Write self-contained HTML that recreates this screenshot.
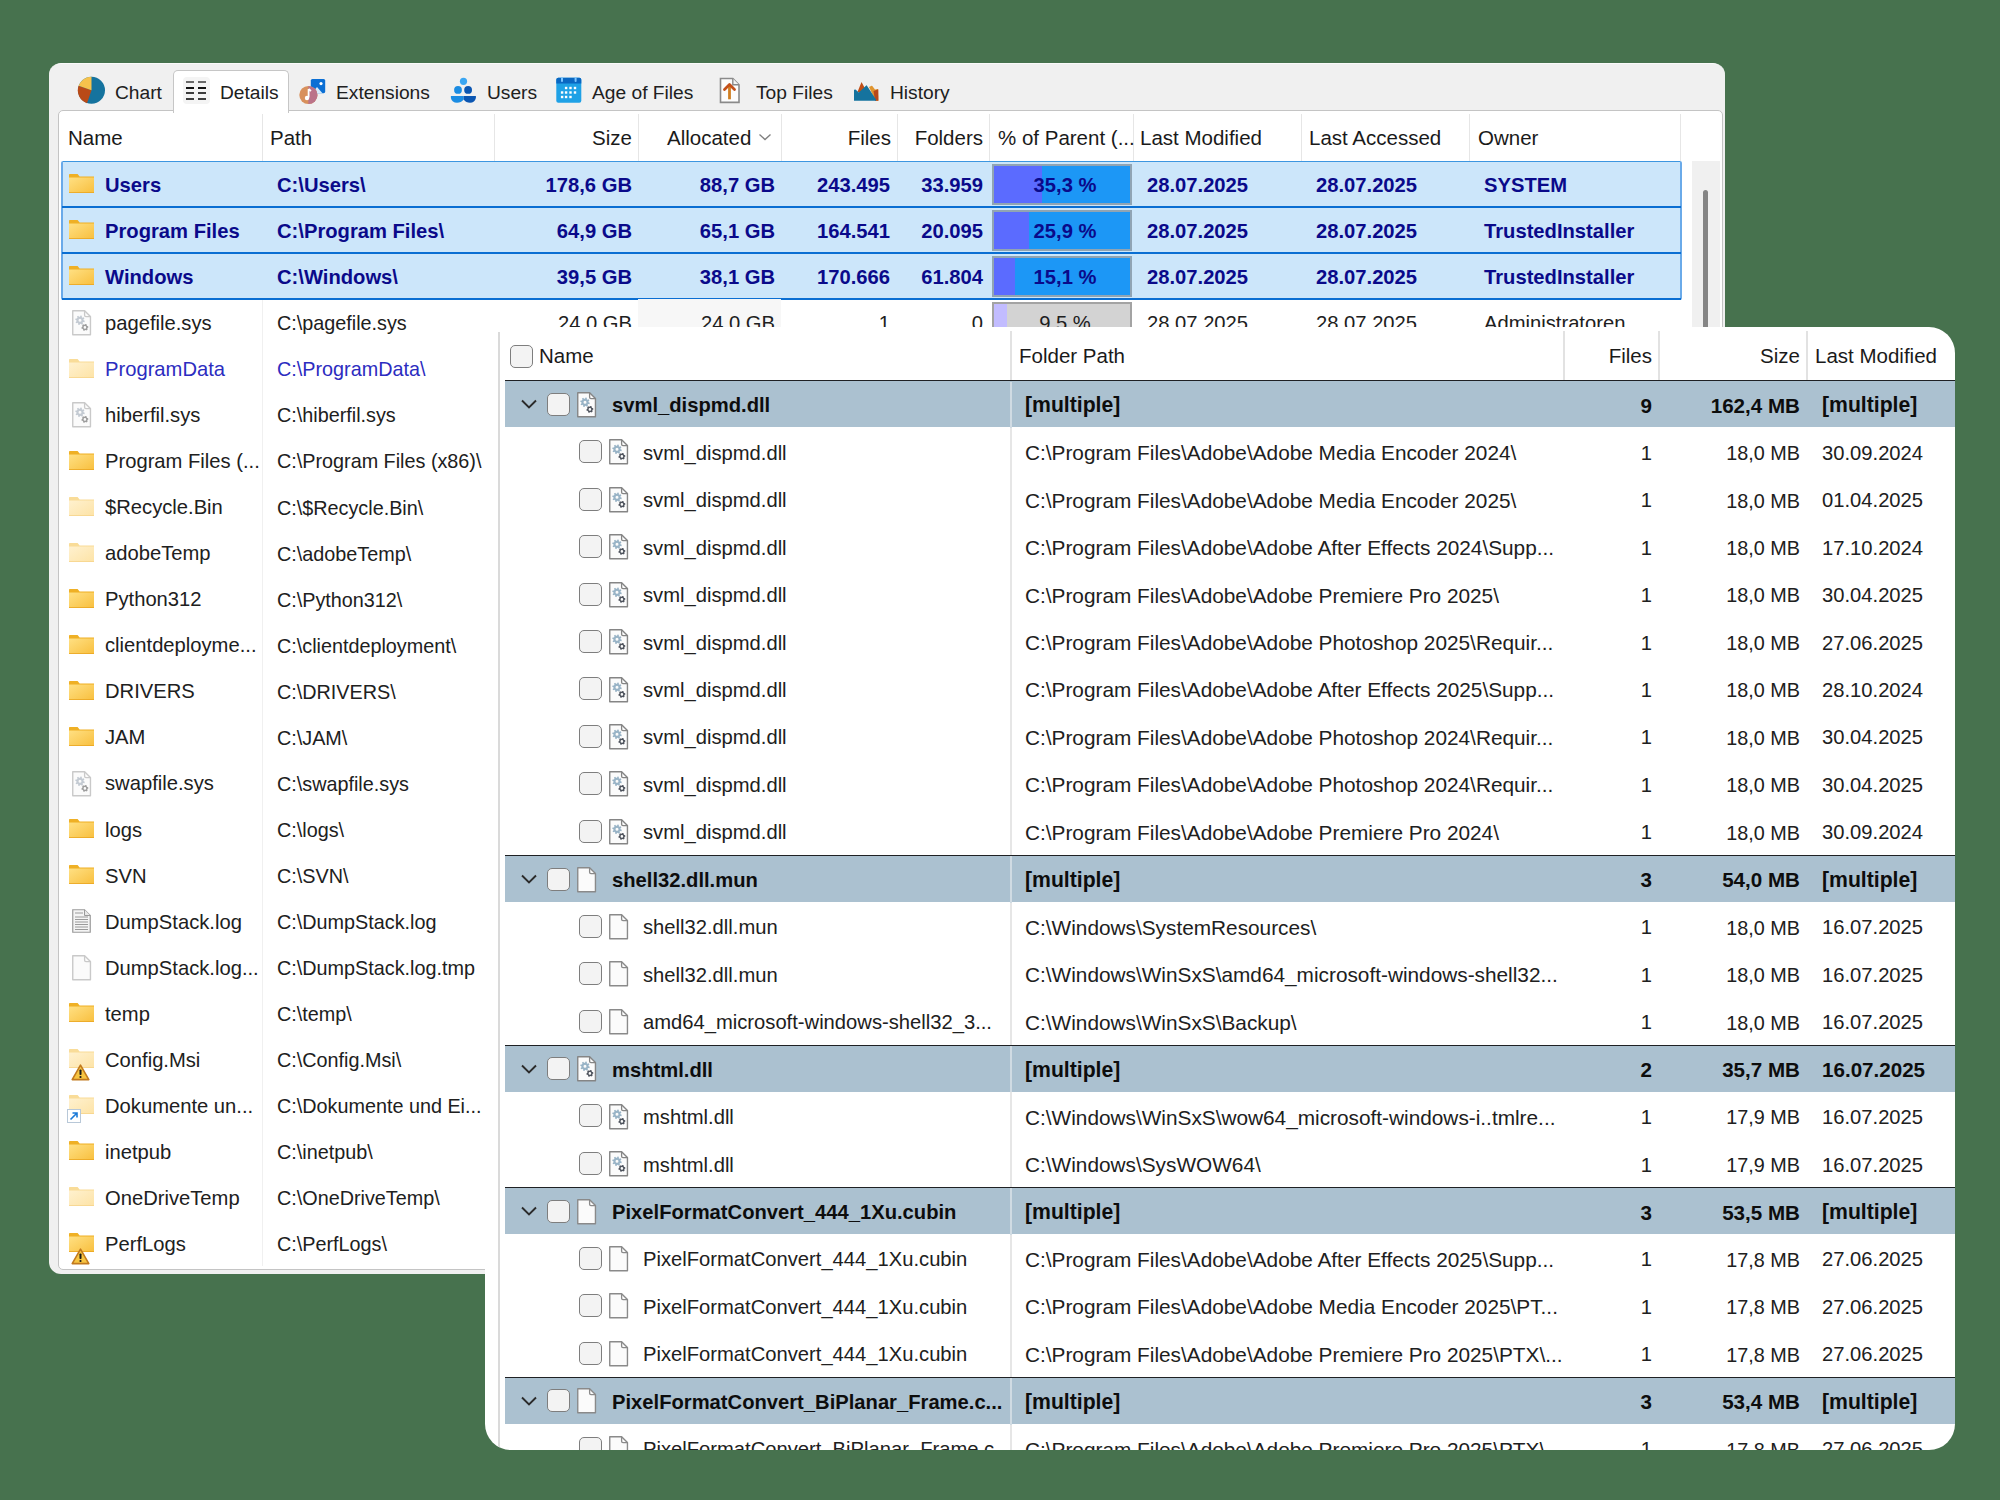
<!DOCTYPE html><html><head><meta charset="utf-8"><style>
*{box-sizing:border-box}
html,body{margin:0;padding:0}
body{width:2000px;height:1500px;background:#47724e;position:relative;overflow:hidden;font-family:"Liberation Sans", sans-serif}
.t{position:absolute;white-space:pre}
.a{position:absolute}
</style></head><body>
<div class="a" style="left:49px;top:63px;width:1676px;height:1211px;background:#f0f0f0;border-radius:12px;border-top:1px solid #fafafa"></div>
<div class="a" style="left:58px;top:110px;width:1665px;height:1160px;background:#fff;border:1.5px solid #c4c4c4;border-radius:5px;"></div>
<div class="a" style="left:173px;top:70px;width:116px;height:42.5px;background:#fff;border:1px solid #c6c6c6;border-bottom:none;border-radius:5px 5px 0 0;"></div>
<div class="t" style="left:115px;top:82.12px;font-size:19.2px;line-height:21.45px;font-weight:400;color:#202020;">Chart</div>
<div class="t" style="left:220px;top:82.12px;font-size:19.2px;line-height:21.45px;font-weight:400;color:#202020;">Details</div>
<div class="t" style="left:336px;top:82.12px;font-size:19.2px;line-height:21.45px;font-weight:400;color:#202020;">Extensions</div>
<div class="t" style="left:487px;top:82.12px;font-size:19.2px;line-height:21.45px;font-weight:400;color:#202020;">Users</div>
<div class="t" style="left:592px;top:82.12px;font-size:19.2px;line-height:21.45px;font-weight:400;color:#202020;">Age of Files</div>
<div class="t" style="left:756px;top:82.12px;font-size:19.2px;line-height:21.45px;font-weight:400;color:#202020;">Top Files</div>
<div class="t" style="left:890px;top:82.12px;font-size:19.2px;line-height:21.45px;font-weight:400;color:#202020;">History</div>
<svg class="a" style="left:77px;top:76px" width="29" height="29" viewBox="0 0 29 29"><circle cx="14.5" cy="14.3" r="13.5" fill="#15739e"/><path d="M14.5 14.3 L10 27.2 A13.5 13.5 0 0 1 1.6 9.8 Z" fill="#b94a17"/><path d="M14.5 14.3 L1.6 9.8 A13.5 13.5 0 0 1 14.5 0.8 Z" fill="#f6c24c"/></svg>
<div class="a" style="left:183px;top:77px;width:27px;height:27px;background:#f4f4f4;border-radius:4px"></div>
<div class="a" style="left:186px;top:81.2px;width:8px;height:1.8px;background:#6a6a6a"></div>
<div class="a" style="left:198.2px;top:81.2px;width:8px;height:1.8px;background:#6a6a6a"></div>
<div class="a" style="left:186px;top:86.8px;width:8px;height:1.8px;background:#111"></div>
<div class="a" style="left:198.2px;top:86.8px;width:8px;height:1.8px;background:#111"></div>
<div class="a" style="left:186px;top:92.4px;width:8px;height:1.8px;background:#3c3c3c"></div>
<div class="a" style="left:198.2px;top:92.4px;width:8px;height:1.8px;background:#3c3c3c"></div>
<div class="a" style="left:186px;top:98.0px;width:8px;height:1.8px;background:#3c3c3c"></div>
<div class="a" style="left:198.2px;top:98.0px;width:8px;height:1.8px;background:#3c3c3c"></div>
<svg class="a" style="left:298px;top:77px" width="30" height="28" viewBox="0 0 30 28"><rect x="12.8" y="2" width="14.4" height="14.2" rx="1.6" fill="#0b6fd4"/><path d="M14 16.2 L19 10 L24.5 16.2 Z" fill="#d6ebfb"/><circle cx="23" cy="6.6" r="1.6" fill="#fff"/><circle cx="10.4" cy="18" r="9.1" fill="#d8905c"/><path d="M10.4 8.9 A9.1 9.1 0 0 1 10.4 27.1 Z" fill="#bb7389"/><path d="M10.6 12 L10.6 20.5 M10.6 12 L13 14" stroke="#fff" stroke-width="1.8" fill="none"/><circle cx="9" cy="21" r="2.2" fill="#fff"/></svg>
<svg class="a" style="left:449px;top:76px" width="29" height="28" viewBox="0 0 29 28"><circle cx="14.5" cy="5.3" r="3.6" fill="#3aa6f2"/><circle cx="9" cy="13.9" r="3.9" fill="#1b8ce2"/><circle cx="19.1" cy="13.9" r="3.9" fill="#0b56b2"/><path d="M1.9 19.9 L14.7 19.9 L14.7 23.5 Q12 26.8 8 26.8 Q3 26.8 1.9 22 Z" fill="#1b8ce2"/><path d="M14.7 19.9 L26.9 19.9 L26.9 22 Q25.8 26.8 21 26.8 Q17 26.8 14.7 23.5 Z" fill="#0b56b2"/></svg>
<svg class="a" style="left:556px;top:77px" width="26" height="27" viewBox="0 0 26 27"><rect x="0.3" y="0.7" width="25" height="25.1" rx="2" fill="#1fa1e6"/><path d="M0.3 2.7 Q0.3 0.7 2.3 0.7 L23.3 0.7 Q25.3 0.7 25.3 2.7 L25.3 6.6 L0.3 6.6 Z" fill="#0a67c2"/><rect x="5" y="0" width="2" height="5" rx="1" fill="#7cc6ff"/><rect x="18.6" y="0" width="2" height="5" rx="1" fill="#7cc6ff"/><rect x="8.9" y="9.8" width="2.4" height="2.4" fill="#fff"/><rect x="13.3" y="9.8" width="2.4" height="2.4" fill="#fff"/><rect x="17.8" y="9.8" width="2.4" height="2.4" fill="#fff"/><rect x="4.9" y="14.3" width="2.4" height="2.4" fill="#fff"/><rect x="8.9" y="14.3" width="2.4" height="2.4" fill="#fff"/><rect x="13.3" y="14.3" width="2.4" height="2.4" fill="#fff"/><rect x="17.8" y="14.3" width="2.4" height="2.4" fill="#fff"/><rect x="4.9" y="18.8" width="2.4" height="2.4" fill="#fff"/><rect x="8.9" y="18.8" width="2.4" height="2.4" fill="#fff"/><rect x="13.3" y="18.8" width="2.4" height="2.4" fill="#fff"/></svg>
<svg class="a" style="left:719px;top:77px" width="22" height="27" viewBox="0 0 22 27"><path d="M1.5 1.5 L13.8 1.5 L20 7.8 L20 25.4 L1.5 25.4 Z" fill="#fdfdfd" stroke="#8a8a8a" stroke-width="1.6"/><path d="M13.8 1.5 L13.8 7.8 L20 7.8" fill="#f4f4f4" stroke="#8a8a8a" stroke-width="1.4"/><path d="M10.5 22.3 L10.5 8.3" stroke="#d07f22" stroke-width="2.8" fill="none"/><path d="M5.5 12.5 L10.5 7.6 L15.5 12.5" stroke="#c4501a" stroke-width="2.8" fill="none" stroke-linecap="round" stroke-linejoin="round"/></svg>
<svg class="a" style="left:853px;top:81px" width="27" height="21" viewBox="0 0 27 21"><path d="M4.5 11 L8.3 1.5 Q8.5 1 8.8 1.5 L12 7.5 L9 12 Z" fill="#c04f18"/><path d="M16 6 L18.6 4.8 Q19 4.6 19.3 5 L22 8.5 L25 8 L25.4 19.7 L22.5 19.7 Z" fill="#e0952f"/><path d="M20.5 10 L25.3 8.3 L25.4 19.7 L22 19.7 Z" fill="#b8481a"/><path d="M1 19.7 L1 9 Q1.5 8 2.5 8.6 L5.8 11.5 L13.2 4.5 Q13.5 4.2 13.8 4.6 L23 18.5 L23 19.7 Z" fill="#15739e"/></svg>
<div class="a" style="left:261.75px;top:114px;width:1.5px;height:47px;background:#e6e6e6"></div>
<div class="a" style="left:493.75px;top:114px;width:1.5px;height:47px;background:#e6e6e6"></div>
<div class="a" style="left:637.75px;top:114px;width:1.5px;height:47px;background:#e6e6e6"></div>
<div class="a" style="left:780.75px;top:114px;width:1.5px;height:47px;background:#e6e6e6"></div>
<div class="a" style="left:896.75px;top:114px;width:1.5px;height:47px;background:#e6e6e6"></div>
<div class="a" style="left:988.75px;top:114px;width:1.5px;height:47px;background:#e6e6e6"></div>
<div class="a" style="left:1132.75px;top:114px;width:1.5px;height:47px;background:#e6e6e6"></div>
<div class="a" style="left:1300.75px;top:114px;width:1.5px;height:47px;background:#e6e6e6"></div>
<div class="a" style="left:1468.75px;top:114px;width:1.5px;height:47px;background:#e6e6e6"></div>
<div class="a" style="left:1679.75px;top:114px;width:1.5px;height:47px;background:#e6e6e6"></div>
<div class="t" style="left:68px;top:127.15px;font-size:20.5px;line-height:22.90px;font-weight:400;color:#1a1a1a;">Name</div>
<div class="t" style="left:270px;top:127.15px;font-size:20.5px;line-height:22.90px;font-weight:400;color:#1a1a1a;">Path</div>
<div class="t" style="right:1368px;top:127.15px;font-size:20.5px;line-height:22.90px;font-weight:400;color:#1a1a1a;">Size</div>
<div class="t" style="left:667px;top:127.15px;font-size:20.5px;line-height:22.90px;font-weight:400;color:#1a1a1a;">Allocated</div>
<div class="t" style="right:1109px;top:127.15px;font-size:20.5px;line-height:22.90px;font-weight:400;color:#1a1a1a;">Files</div>
<div class="t" style="right:1017px;top:127.15px;font-size:20.5px;line-height:22.90px;font-weight:400;color:#1a1a1a;">Folders</div>
<div class="t" style="left:998px;top:127.15px;font-size:20.5px;line-height:22.90px;font-weight:400;color:#1a1a1a;">% of Parent (...</div>
<div class="t" style="left:1140px;top:127.15px;font-size:20.5px;line-height:22.90px;font-weight:400;color:#1a1a1a;">Last Modified</div>
<div class="t" style="left:1309px;top:127.15px;font-size:20.5px;line-height:22.90px;font-weight:400;color:#1a1a1a;">Last Accessed</div>
<div class="t" style="left:1478px;top:127.15px;font-size:20.5px;line-height:22.90px;font-weight:400;color:#1a1a1a;">Owner</div>
<svg class="a" style="left:758px;top:132px" width="14" height="10" viewBox="0 0 14 10"><path d="M1.5 2.5 L7 7.5 L12.5 2.5" fill="none" stroke="#808080" stroke-width="1.4"/></svg>
<div class="a" style="left:262px;top:161px;width:1px;height:1105px;background:#f0f0f0"></div>
<div class="a" style="left:1692px;top:161px;width:28px;height:1105px;background:#f0f0f0"></div>
<div class="a" style="left:1703px;top:190px;width:5px;height:140px;background:#858585;border-radius:3px"></div>
<div class="a" style="left:61px;top:161px;width:1621px;height:139px;background:#cce6fa;border-left:2px solid #6aaae9;border-right:2px solid #6aaae9;border-top:1.5px solid #3c96e0;border-radius:2px"></div>
<div class="a" style="left:62px;top:206px;width:1619px;height:2px;background:#0a6ed2"></div>
<div class="a" style="left:62px;top:252px;width:1619px;height:2px;background:#0a6ed2"></div>
<div class="a" style="left:62px;top:298px;width:1619px;height:2px;background:#0a6ed2"></div>
<svg class="a" style="left:69px;top:174.30px" width="25" height="19" viewBox="0 0 25 19.4" preserveAspectRatio="none"><defs><linearGradient id="fg0" x1="0" y1="0" x2="1" y2="1"><stop offset="0" stop-color="#ffe083"/><stop offset="1" stop-color="#f8bf3e"/></linearGradient></defs><path d="M0 0.8 Q0 0 0.8 0 L8.6 0 L10.6 2.6 L25 2.6 L25 19.4 L0 19.4 Z" fill="#efb025"/><path d="M0 3.6 L25 3.6 L25 19.4 L0 19.4 Z" fill="url(#fg0)"/><rect x="0" y="18.6" width="25" height="0.8" fill="#eaa520"/></svg>
<div class="t" style="left:105px;top:173.82px;font-size:20.2px;line-height:22.56px;font-weight:700;color:#0a0a8a;">Users</div>
<div class="t" style="left:277px;top:173.82px;font-size:20.2px;line-height:22.56px;font-weight:700;color:#0a0a8a;">C:\Users\</div>
<div class="t" style="right:1368px;top:173.82px;font-size:20.2px;line-height:22.56px;font-weight:700;color:#0a0a8a;">178,6 GB</div>
<div class="t" style="right:1225px;top:173.82px;font-size:20.2px;line-height:22.56px;font-weight:700;color:#0a0a8a;">88,7 GB</div>
<div class="t" style="right:1110px;top:173.82px;font-size:20.2px;line-height:22.56px;font-weight:700;color:#0a0a8a;">243.495</div>
<div class="t" style="right:1017px;top:173.82px;font-size:20.2px;line-height:22.56px;font-weight:700;color:#0a0a8a;">33.959</div>
<div class="a" style="left:992px;top:164.0px;width:140px;height:41px;background:#1c97f6;border:2px solid #90a4b4"></div>
<div class="a" style="left:994px;top:166.0px;width:48.0px;height:37px;background:#5b6bff"></div>
<div class="t" style="left:995px;width:140px;text-align:center;top:173.82px;font-size:20.2px;line-height:22.56px;font-weight:700;color:#0a0a8a">35,3 %</div>
<div class="t" style="left:1147px;top:173.82px;font-size:20.2px;line-height:22.56px;font-weight:700;color:#0a0a8a;">28.07.2025</div>
<div class="t" style="left:1316px;top:173.82px;font-size:20.2px;line-height:22.56px;font-weight:700;color:#0a0a8a;">28.07.2025</div>
<div class="t" style="left:1484px;top:173.82px;font-size:20.2px;line-height:22.56px;font-weight:700;color:#0a0a8a;">SYSTEM</div>
<svg class="a" style="left:69px;top:220.35px" width="25" height="19" viewBox="0 0 25 19.4" preserveAspectRatio="none"><defs><linearGradient id="fg0" x1="0" y1="0" x2="1" y2="1"><stop offset="0" stop-color="#ffe083"/><stop offset="1" stop-color="#f8bf3e"/></linearGradient></defs><path d="M0 0.8 Q0 0 0.8 0 L8.6 0 L10.6 2.6 L25 2.6 L25 19.4 L0 19.4 Z" fill="#efb025"/><path d="M0 3.6 L25 3.6 L25 19.4 L0 19.4 Z" fill="url(#fg0)"/><rect x="0" y="18.6" width="25" height="0.8" fill="#eaa520"/></svg>
<div class="t" style="left:105px;top:219.87px;font-size:20.2px;line-height:22.56px;font-weight:700;color:#0a0a8a;">Program Files</div>
<div class="t" style="left:277px;top:219.87px;font-size:20.2px;line-height:22.56px;font-weight:700;color:#0a0a8a;">C:\Program Files\</div>
<div class="t" style="right:1368px;top:219.87px;font-size:20.2px;line-height:22.56px;font-weight:700;color:#0a0a8a;">64,9 GB</div>
<div class="t" style="right:1225px;top:219.87px;font-size:20.2px;line-height:22.56px;font-weight:700;color:#0a0a8a;">65,1 GB</div>
<div class="t" style="right:1110px;top:219.87px;font-size:20.2px;line-height:22.56px;font-weight:700;color:#0a0a8a;">164.541</div>
<div class="t" style="right:1017px;top:219.87px;font-size:20.2px;line-height:22.56px;font-weight:700;color:#0a0a8a;">20.095</div>
<div class="a" style="left:992px;top:210.05px;width:140px;height:41px;background:#1c97f6;border:2px solid #90a4b4"></div>
<div class="a" style="left:994px;top:212.05px;width:35.2px;height:37px;background:#5b6bff"></div>
<div class="t" style="left:995px;width:140px;text-align:center;top:219.87px;font-size:20.2px;line-height:22.56px;font-weight:700;color:#0a0a8a">25,9 %</div>
<div class="t" style="left:1147px;top:219.87px;font-size:20.2px;line-height:22.56px;font-weight:700;color:#0a0a8a;">28.07.2025</div>
<div class="t" style="left:1316px;top:219.87px;font-size:20.2px;line-height:22.56px;font-weight:700;color:#0a0a8a;">28.07.2025</div>
<div class="t" style="left:1484px;top:219.87px;font-size:20.2px;line-height:22.56px;font-weight:700;color:#0a0a8a;">TrustedInstaller</div>
<svg class="a" style="left:69px;top:266.40px" width="25" height="19" viewBox="0 0 25 19.4" preserveAspectRatio="none"><defs><linearGradient id="fg0" x1="0" y1="0" x2="1" y2="1"><stop offset="0" stop-color="#ffe083"/><stop offset="1" stop-color="#f8bf3e"/></linearGradient></defs><path d="M0 0.8 Q0 0 0.8 0 L8.6 0 L10.6 2.6 L25 2.6 L25 19.4 L0 19.4 Z" fill="#efb025"/><path d="M0 3.6 L25 3.6 L25 19.4 L0 19.4 Z" fill="url(#fg0)"/><rect x="0" y="18.6" width="25" height="0.8" fill="#eaa520"/></svg>
<div class="t" style="left:105px;top:265.92px;font-size:20.2px;line-height:22.56px;font-weight:700;color:#0a0a8a;">Windows</div>
<div class="t" style="left:277px;top:265.92px;font-size:20.2px;line-height:22.56px;font-weight:700;color:#0a0a8a;">C:\Windows\</div>
<div class="t" style="right:1368px;top:265.92px;font-size:20.2px;line-height:22.56px;font-weight:700;color:#0a0a8a;">39,5 GB</div>
<div class="t" style="right:1225px;top:265.92px;font-size:20.2px;line-height:22.56px;font-weight:700;color:#0a0a8a;">38,1 GB</div>
<div class="t" style="right:1110px;top:265.92px;font-size:20.2px;line-height:22.56px;font-weight:700;color:#0a0a8a;">170.666</div>
<div class="t" style="right:1017px;top:265.92px;font-size:20.2px;line-height:22.56px;font-weight:700;color:#0a0a8a;">61.804</div>
<div class="a" style="left:992px;top:256.1px;width:140px;height:41px;background:#1c97f6;border:2px solid #90a4b4"></div>
<div class="a" style="left:994px;top:258.1px;width:20.5px;height:37px;background:#5b6bff"></div>
<div class="t" style="left:995px;width:140px;text-align:center;top:265.92px;font-size:20.2px;line-height:22.56px;font-weight:700;color:#0a0a8a">15,1 %</div>
<div class="t" style="left:1147px;top:265.92px;font-size:20.2px;line-height:22.56px;font-weight:700;color:#0a0a8a;">28.07.2025</div>
<div class="t" style="left:1316px;top:265.92px;font-size:20.2px;line-height:22.56px;font-weight:700;color:#0a0a8a;">28.07.2025</div>
<div class="t" style="left:1484px;top:265.92px;font-size:20.2px;line-height:22.56px;font-weight:700;color:#0a0a8a;">TrustedInstaller</div>
<div class="a" style="left:638px;top:299.15px;width:143px;height:46px;background:#f7f7f7"></div>
<svg class="a" style="left:71.5px;top:310.15px" width="20" height="26" viewBox="0 0 20 26"><path d="M0.75 0.75 L12.6 0.75 L18.45 6.6 L18.45 24.75 L0.75 24.75 Z" fill="#fbfbfb" stroke="#c9c9c9" stroke-width="1.4" stroke-linejoin="round"/><path d="M12.6 0.75 L12.6 5.2 Q12.6 6.6 14 6.6 L18.45 6.6" fill="none" stroke="#c9c9c9" stroke-width="1.3"/><path d="M8.00 6.70 L8.56 5.53 L9.84 5.87 L9.76 7.16 L10.55 7.75 L11.77 7.33 L12.43 8.46 L11.46 9.32 L11.60 10.30 L12.77 10.86 L12.43 12.14 L11.14 12.06 L10.55 12.85 L10.97 14.07 L9.84 14.73 L8.98 13.76 L8.00 13.90 L7.44 15.07 L6.16 14.73 L6.24 13.44 L5.45 12.85 L4.23 13.27 L3.57 12.14 L4.54 11.28 L4.40 10.30 L3.23 9.74 L3.57 8.46 L4.86 8.54 L5.45 7.75 L5.03 6.53 L6.16 5.87 L7.02 6.84 Z M9.50 10.30 A1.5 1.5 0 1 0 6.50 10.30 A1.5 1.5 0 1 0 9.50 10.30 Z" fill="#c3cad2" fill-rule="evenodd"/><path d="M12.90 14.60 L13.45 13.94 L14.65 14.37 L14.66 15.22 L15.32 16.00 L16.17 16.15 L16.40 17.40 L15.67 17.84 L15.32 18.80 L15.62 19.60 L14.65 20.43 L13.90 20.01 L12.90 20.20 L12.35 20.86 L11.15 20.43 L11.14 19.58 L10.48 18.80 L9.63 18.65 L9.40 17.40 L10.13 16.96 L10.48 16.00 L10.18 15.20 L11.15 14.37 L11.90 14.79 Z M14.20 17.40 A1.3 1.3 0 1 0 11.60 17.40 A1.3 1.3 0 1 0 14.20 17.40 Z" fill="#9d9d9d" fill-rule="evenodd"/></svg>
<div class="t" style="left:105px;top:311.97px;font-size:20.2px;line-height:22.56px;font-weight:400;color:#202020;">pagefile.sys</div>
<div class="t" style="left:277px;top:312.33px;font-size:19.8px;line-height:22.12px;font-weight:400;color:#202020;">C:\pagefile.sys</div>
<div class="t" style="right:1368px;top:311.97px;font-size:20.2px;line-height:22.56px;font-weight:400;color:#202020;">24,0 GB</div>
<div class="t" style="right:1225px;top:311.97px;font-size:20.2px;line-height:22.56px;font-weight:400;color:#202020;">24,0 GB</div>
<div class="t" style="right:1110px;top:311.97px;font-size:20.2px;line-height:22.56px;font-weight:400;color:#202020;">1</div>
<div class="t" style="right:1017px;top:311.97px;font-size:20.2px;line-height:22.56px;font-weight:400;color:#202020;">0</div>
<div class="a" style="left:992px;top:302.15px;width:140px;height:41px;background:#d3d3d3;border:2px solid #a3a3a3"></div>
<div class="a" style="left:994px;top:304.15px;width:12.9px;height:37px;background:#c2bcff"></div>
<div class="t" style="left:995px;width:140px;text-align:center;top:311.97px;font-size:20.2px;line-height:22.56px;font-weight:400;color:#202020">9,5 %</div>
<div class="t" style="left:1147px;top:311.97px;font-size:20.2px;line-height:22.56px;font-weight:400;color:#202020;">28.07.2025</div>
<div class="t" style="left:1316px;top:311.97px;font-size:20.2px;line-height:22.56px;font-weight:400;color:#202020;">28.07.2025</div>
<div class="t" style="left:1484px;top:311.97px;font-size:20.2px;line-height:22.56px;font-weight:400;color:#202020;">Administratoren</div>
<div class="a" style="left:638px;top:345.2px;width:143px;height:46px;background:#f7f7f7"></div>
<svg class="a" style="left:69px;top:358.50px" width="25" height="19" viewBox="0 0 25 19.4" preserveAspectRatio="none"><defs><linearGradient id="fg1" x1="0" y1="0" x2="1" y2="1"><stop offset="0" stop-color="#fff1cf"/><stop offset="1" stop-color="#fde3a6"/></linearGradient></defs><path d="M0 0.8 Q0 0 0.8 0 L8.6 0 L10.6 2.6 L25 2.6 L25 19.4 L0 19.4 Z" fill="#f9dc98"/><path d="M0 3.6 L25 3.6 L25 19.4 L0 19.4 Z" fill="url(#fg1)"/><rect x="0" y="18.6" width="25" height="0.8" fill="#f6d48a"/></svg>
<div class="t" style="left:105px;top:358.02px;font-size:20.2px;line-height:22.56px;font-weight:400;color:#2c2cc0;">ProgramData</div>
<div class="t" style="left:277px;top:358.38px;font-size:19.8px;line-height:22.12px;font-weight:400;color:#2c2cc0;">C:\ProgramData\</div>
<div class="a" style="left:638px;top:391.25px;width:143px;height:46px;background:#f7f7f7"></div>
<svg class="a" style="left:71.5px;top:402.25px" width="20" height="26" viewBox="0 0 20 26"><path d="M0.75 0.75 L12.6 0.75 L18.45 6.6 L18.45 24.75 L0.75 24.75 Z" fill="#fbfbfb" stroke="#c9c9c9" stroke-width="1.4" stroke-linejoin="round"/><path d="M12.6 0.75 L12.6 5.2 Q12.6 6.6 14 6.6 L18.45 6.6" fill="none" stroke="#c9c9c9" stroke-width="1.3"/><path d="M8.00 6.70 L8.56 5.53 L9.84 5.87 L9.76 7.16 L10.55 7.75 L11.77 7.33 L12.43 8.46 L11.46 9.32 L11.60 10.30 L12.77 10.86 L12.43 12.14 L11.14 12.06 L10.55 12.85 L10.97 14.07 L9.84 14.73 L8.98 13.76 L8.00 13.90 L7.44 15.07 L6.16 14.73 L6.24 13.44 L5.45 12.85 L4.23 13.27 L3.57 12.14 L4.54 11.28 L4.40 10.30 L3.23 9.74 L3.57 8.46 L4.86 8.54 L5.45 7.75 L5.03 6.53 L6.16 5.87 L7.02 6.84 Z M9.50 10.30 A1.5 1.5 0 1 0 6.50 10.30 A1.5 1.5 0 1 0 9.50 10.30 Z" fill="#c3cad2" fill-rule="evenodd"/><path d="M12.90 14.60 L13.45 13.94 L14.65 14.37 L14.66 15.22 L15.32 16.00 L16.17 16.15 L16.40 17.40 L15.67 17.84 L15.32 18.80 L15.62 19.60 L14.65 20.43 L13.90 20.01 L12.90 20.20 L12.35 20.86 L11.15 20.43 L11.14 19.58 L10.48 18.80 L9.63 18.65 L9.40 17.40 L10.13 16.96 L10.48 16.00 L10.18 15.20 L11.15 14.37 L11.90 14.79 Z M14.20 17.40 A1.3 1.3 0 1 0 11.60 17.40 A1.3 1.3 0 1 0 14.20 17.40 Z" fill="#9d9d9d" fill-rule="evenodd"/></svg>
<div class="t" style="left:105px;top:404.07px;font-size:20.2px;line-height:22.56px;font-weight:400;color:#202020;">hiberfil.sys</div>
<div class="t" style="left:277px;top:404.43px;font-size:19.8px;line-height:22.12px;font-weight:400;color:#202020;">C:\hiberfil.sys</div>
<div class="a" style="left:638px;top:437.29999999999995px;width:143px;height:46px;background:#f7f7f7"></div>
<svg class="a" style="left:69px;top:450.60px" width="25" height="19" viewBox="0 0 25 19.4" preserveAspectRatio="none"><defs><linearGradient id="fg0" x1="0" y1="0" x2="1" y2="1"><stop offset="0" stop-color="#ffe083"/><stop offset="1" stop-color="#f8bf3e"/></linearGradient></defs><path d="M0 0.8 Q0 0 0.8 0 L8.6 0 L10.6 2.6 L25 2.6 L25 19.4 L0 19.4 Z" fill="#efb025"/><path d="M0 3.6 L25 3.6 L25 19.4 L0 19.4 Z" fill="url(#fg0)"/><rect x="0" y="18.6" width="25" height="0.8" fill="#eaa520"/></svg>
<div class="t" style="left:105px;top:450.12px;font-size:20.2px;line-height:22.56px;font-weight:400;color:#202020;">Program Files (...</div>
<div class="t" style="left:277px;top:450.48px;font-size:19.8px;line-height:22.12px;font-weight:400;color:#202020;">C:\Program Files (x86)\</div>
<div class="a" style="left:638px;top:483.34999999999997px;width:143px;height:46px;background:#f7f7f7"></div>
<svg class="a" style="left:69px;top:496.65px" width="25" height="19" viewBox="0 0 25 19.4" preserveAspectRatio="none"><defs><linearGradient id="fg1" x1="0" y1="0" x2="1" y2="1"><stop offset="0" stop-color="#fff1cf"/><stop offset="1" stop-color="#fde3a6"/></linearGradient></defs><path d="M0 0.8 Q0 0 0.8 0 L8.6 0 L10.6 2.6 L25 2.6 L25 19.4 L0 19.4 Z" fill="#f9dc98"/><path d="M0 3.6 L25 3.6 L25 19.4 L0 19.4 Z" fill="url(#fg1)"/><rect x="0" y="18.6" width="25" height="0.8" fill="#f6d48a"/></svg>
<div class="t" style="left:105px;top:496.17px;font-size:20.2px;line-height:22.56px;font-weight:400;color:#202020;">$Recycle.Bin</div>
<div class="t" style="left:277px;top:496.53px;font-size:19.8px;line-height:22.12px;font-weight:400;color:#202020;">C:\$Recycle.Bin\</div>
<div class="a" style="left:638px;top:529.4px;width:143px;height:46px;background:#f7f7f7"></div>
<svg class="a" style="left:69px;top:542.70px" width="25" height="19" viewBox="0 0 25 19.4" preserveAspectRatio="none"><defs><linearGradient id="fg1" x1="0" y1="0" x2="1" y2="1"><stop offset="0" stop-color="#fff1cf"/><stop offset="1" stop-color="#fde3a6"/></linearGradient></defs><path d="M0 0.8 Q0 0 0.8 0 L8.6 0 L10.6 2.6 L25 2.6 L25 19.4 L0 19.4 Z" fill="#f9dc98"/><path d="M0 3.6 L25 3.6 L25 19.4 L0 19.4 Z" fill="url(#fg1)"/><rect x="0" y="18.6" width="25" height="0.8" fill="#f6d48a"/></svg>
<div class="t" style="left:105px;top:542.22px;font-size:20.2px;line-height:22.56px;font-weight:400;color:#202020;">adobeTemp</div>
<div class="t" style="left:277px;top:542.58px;font-size:19.8px;line-height:22.12px;font-weight:400;color:#202020;">C:\adobeTemp\</div>
<div class="a" style="left:638px;top:575.45px;width:143px;height:46px;background:#f7f7f7"></div>
<svg class="a" style="left:69px;top:588.75px" width="25" height="19" viewBox="0 0 25 19.4" preserveAspectRatio="none"><defs><linearGradient id="fg0" x1="0" y1="0" x2="1" y2="1"><stop offset="0" stop-color="#ffe083"/><stop offset="1" stop-color="#f8bf3e"/></linearGradient></defs><path d="M0 0.8 Q0 0 0.8 0 L8.6 0 L10.6 2.6 L25 2.6 L25 19.4 L0 19.4 Z" fill="#efb025"/><path d="M0 3.6 L25 3.6 L25 19.4 L0 19.4 Z" fill="url(#fg0)"/><rect x="0" y="18.6" width="25" height="0.8" fill="#eaa520"/></svg>
<div class="t" style="left:105px;top:588.27px;font-size:20.2px;line-height:22.56px;font-weight:400;color:#202020;">Python312</div>
<div class="t" style="left:277px;top:588.63px;font-size:19.8px;line-height:22.12px;font-weight:400;color:#202020;">C:\Python312\</div>
<div class="a" style="left:638px;top:621.5px;width:143px;height:46px;background:#f7f7f7"></div>
<svg class="a" style="left:69px;top:634.80px" width="25" height="19" viewBox="0 0 25 19.4" preserveAspectRatio="none"><defs><linearGradient id="fg0" x1="0" y1="0" x2="1" y2="1"><stop offset="0" stop-color="#ffe083"/><stop offset="1" stop-color="#f8bf3e"/></linearGradient></defs><path d="M0 0.8 Q0 0 0.8 0 L8.6 0 L10.6 2.6 L25 2.6 L25 19.4 L0 19.4 Z" fill="#efb025"/><path d="M0 3.6 L25 3.6 L25 19.4 L0 19.4 Z" fill="url(#fg0)"/><rect x="0" y="18.6" width="25" height="0.8" fill="#eaa520"/></svg>
<div class="t" style="left:105px;top:634.32px;font-size:20.2px;line-height:22.56px;font-weight:400;color:#202020;">clientdeployme...</div>
<div class="t" style="left:277px;top:634.68px;font-size:19.8px;line-height:22.12px;font-weight:400;color:#202020;">C:\clientdeployment\</div>
<div class="a" style="left:638px;top:667.55px;width:143px;height:46px;background:#f7f7f7"></div>
<svg class="a" style="left:69px;top:680.85px" width="25" height="19" viewBox="0 0 25 19.4" preserveAspectRatio="none"><defs><linearGradient id="fg0" x1="0" y1="0" x2="1" y2="1"><stop offset="0" stop-color="#ffe083"/><stop offset="1" stop-color="#f8bf3e"/></linearGradient></defs><path d="M0 0.8 Q0 0 0.8 0 L8.6 0 L10.6 2.6 L25 2.6 L25 19.4 L0 19.4 Z" fill="#efb025"/><path d="M0 3.6 L25 3.6 L25 19.4 L0 19.4 Z" fill="url(#fg0)"/><rect x="0" y="18.6" width="25" height="0.8" fill="#eaa520"/></svg>
<div class="t" style="left:105px;top:680.37px;font-size:20.2px;line-height:22.56px;font-weight:400;color:#202020;">DRIVERS</div>
<div class="t" style="left:277px;top:680.73px;font-size:19.8px;line-height:22.12px;font-weight:400;color:#202020;">C:\DRIVERS\</div>
<div class="a" style="left:638px;top:713.5999999999999px;width:143px;height:46px;background:#f7f7f7"></div>
<svg class="a" style="left:69px;top:726.90px" width="25" height="19" viewBox="0 0 25 19.4" preserveAspectRatio="none"><defs><linearGradient id="fg0" x1="0" y1="0" x2="1" y2="1"><stop offset="0" stop-color="#ffe083"/><stop offset="1" stop-color="#f8bf3e"/></linearGradient></defs><path d="M0 0.8 Q0 0 0.8 0 L8.6 0 L10.6 2.6 L25 2.6 L25 19.4 L0 19.4 Z" fill="#efb025"/><path d="M0 3.6 L25 3.6 L25 19.4 L0 19.4 Z" fill="url(#fg0)"/><rect x="0" y="18.6" width="25" height="0.8" fill="#eaa520"/></svg>
<div class="t" style="left:105px;top:726.42px;font-size:20.2px;line-height:22.56px;font-weight:400;color:#202020;">JAM</div>
<div class="t" style="left:277px;top:726.78px;font-size:19.8px;line-height:22.12px;font-weight:400;color:#202020;">C:\JAM\</div>
<div class="a" style="left:638px;top:759.65px;width:143px;height:46px;background:#f7f7f7"></div>
<svg class="a" style="left:71.5px;top:770.65px" width="20" height="26" viewBox="0 0 20 26"><path d="M0.75 0.75 L12.6 0.75 L18.45 6.6 L18.45 24.75 L0.75 24.75 Z" fill="#fbfbfb" stroke="#c9c9c9" stroke-width="1.4" stroke-linejoin="round"/><path d="M12.6 0.75 L12.6 5.2 Q12.6 6.6 14 6.6 L18.45 6.6" fill="none" stroke="#c9c9c9" stroke-width="1.3"/><path d="M8.00 6.70 L8.56 5.53 L9.84 5.87 L9.76 7.16 L10.55 7.75 L11.77 7.33 L12.43 8.46 L11.46 9.32 L11.60 10.30 L12.77 10.86 L12.43 12.14 L11.14 12.06 L10.55 12.85 L10.97 14.07 L9.84 14.73 L8.98 13.76 L8.00 13.90 L7.44 15.07 L6.16 14.73 L6.24 13.44 L5.45 12.85 L4.23 13.27 L3.57 12.14 L4.54 11.28 L4.40 10.30 L3.23 9.74 L3.57 8.46 L4.86 8.54 L5.45 7.75 L5.03 6.53 L6.16 5.87 L7.02 6.84 Z M9.50 10.30 A1.5 1.5 0 1 0 6.50 10.30 A1.5 1.5 0 1 0 9.50 10.30 Z" fill="#c3cad2" fill-rule="evenodd"/><path d="M12.90 14.60 L13.45 13.94 L14.65 14.37 L14.66 15.22 L15.32 16.00 L16.17 16.15 L16.40 17.40 L15.67 17.84 L15.32 18.80 L15.62 19.60 L14.65 20.43 L13.90 20.01 L12.90 20.20 L12.35 20.86 L11.15 20.43 L11.14 19.58 L10.48 18.80 L9.63 18.65 L9.40 17.40 L10.13 16.96 L10.48 16.00 L10.18 15.20 L11.15 14.37 L11.90 14.79 Z M14.20 17.40 A1.3 1.3 0 1 0 11.60 17.40 A1.3 1.3 0 1 0 14.20 17.40 Z" fill="#9d9d9d" fill-rule="evenodd"/></svg>
<div class="t" style="left:105px;top:772.47px;font-size:20.2px;line-height:22.56px;font-weight:400;color:#202020;">swapfile.sys</div>
<div class="t" style="left:277px;top:772.83px;font-size:19.8px;line-height:22.12px;font-weight:400;color:#202020;">C:\swapfile.sys</div>
<div class="a" style="left:638px;top:805.6999999999999px;width:143px;height:46px;background:#f7f7f7"></div>
<svg class="a" style="left:69px;top:819.00px" width="25" height="19" viewBox="0 0 25 19.4" preserveAspectRatio="none"><defs><linearGradient id="fg0" x1="0" y1="0" x2="1" y2="1"><stop offset="0" stop-color="#ffe083"/><stop offset="1" stop-color="#f8bf3e"/></linearGradient></defs><path d="M0 0.8 Q0 0 0.8 0 L8.6 0 L10.6 2.6 L25 2.6 L25 19.4 L0 19.4 Z" fill="#efb025"/><path d="M0 3.6 L25 3.6 L25 19.4 L0 19.4 Z" fill="url(#fg0)"/><rect x="0" y="18.6" width="25" height="0.8" fill="#eaa520"/></svg>
<div class="t" style="left:105px;top:818.52px;font-size:20.2px;line-height:22.56px;font-weight:400;color:#202020;">logs</div>
<div class="t" style="left:277px;top:818.88px;font-size:19.8px;line-height:22.12px;font-weight:400;color:#202020;">C:\logs\</div>
<div class="a" style="left:638px;top:851.75px;width:143px;height:46px;background:#f7f7f7"></div>
<svg class="a" style="left:69px;top:865.05px" width="25" height="19" viewBox="0 0 25 19.4" preserveAspectRatio="none"><defs><linearGradient id="fg0" x1="0" y1="0" x2="1" y2="1"><stop offset="0" stop-color="#ffe083"/><stop offset="1" stop-color="#f8bf3e"/></linearGradient></defs><path d="M0 0.8 Q0 0 0.8 0 L8.6 0 L10.6 2.6 L25 2.6 L25 19.4 L0 19.4 Z" fill="#efb025"/><path d="M0 3.6 L25 3.6 L25 19.4 L0 19.4 Z" fill="url(#fg0)"/><rect x="0" y="18.6" width="25" height="0.8" fill="#eaa520"/></svg>
<div class="t" style="left:105px;top:864.57px;font-size:20.2px;line-height:22.56px;font-weight:400;color:#202020;">SVN</div>
<div class="t" style="left:277px;top:864.93px;font-size:19.8px;line-height:22.12px;font-weight:400;color:#202020;">C:\SVN\</div>
<div class="a" style="left:638px;top:897.8px;width:143px;height:46px;background:#f7f7f7"></div>
<svg class="a" style="left:72px;top:908.8px" width="19" height="24" viewBox="0 0 19 24"><path d="M0.75 0.75 L12.5 0.75 L18.25 6.5 L18.25 23.25 L0.75 23.25 Z" fill="#f4f4f4" stroke="#9a9a9a" stroke-width="1.2"/><path d="M12.5 0.75 L12.5 6.5 L18.25 6.5" fill="#e8e8e8" stroke="#9a9a9a" stroke-width="1"/><line x1="3" y1="4" x2="11" y2="4" stroke="#9a9a9a" stroke-width="1"/><line x1="3" y1="8" x2="16" y2="8" stroke="#9a9a9a" stroke-width="1"/><line x1="3" y1="10.5" x2="16" y2="10.5" stroke="#9a9a9a" stroke-width="1"/><line x1="3" y1="13" x2="16" y2="13" stroke="#9a9a9a" stroke-width="1"/><line x1="3" y1="15.5" x2="16" y2="15.5" stroke="#9a9a9a" stroke-width="1"/><line x1="3" y1="18" x2="16" y2="18" stroke="#9a9a9a" stroke-width="1"/><line x1="3" y1="20.5" x2="16" y2="20.5" stroke="#9a9a9a" stroke-width="1"/></svg>
<div class="t" style="left:105px;top:910.62px;font-size:20.2px;line-height:22.56px;font-weight:400;color:#202020;">DumpStack.log</div>
<div class="t" style="left:277px;top:910.98px;font-size:19.8px;line-height:22.12px;font-weight:400;color:#202020;">C:\DumpStack.log</div>
<div class="a" style="left:638px;top:943.8499999999999px;width:143px;height:46px;background:#f7f7f7"></div>
<svg class="a" style="left:71.5px;top:954.8499999999999px" width="20" height="26" viewBox="0 0 20 26"><path d="M0.75 0.75 L12.6 0.75 L18.45 6.6 L18.45 24.75 L0.75 24.75 Z" fill="#fbfbfb" stroke="#c9c9c9" stroke-width="1.4" stroke-linejoin="round"/><path d="M12.6 0.75 L12.6 5.2 Q12.6 6.6 14 6.6 L18.45 6.6" fill="none" stroke="#c9c9c9" stroke-width="1.3"/></svg>
<div class="t" style="left:105px;top:956.67px;font-size:20.2px;line-height:22.56px;font-weight:400;color:#202020;">DumpStack.log...</div>
<div class="t" style="left:277px;top:957.03px;font-size:19.8px;line-height:22.12px;font-weight:400;color:#202020;">C:\DumpStack.log.tmp</div>
<div class="a" style="left:638px;top:989.9px;width:143px;height:46px;background:#f7f7f7"></div>
<svg class="a" style="left:69px;top:1003.20px" width="25" height="19" viewBox="0 0 25 19.4" preserveAspectRatio="none"><defs><linearGradient id="fg0" x1="0" y1="0" x2="1" y2="1"><stop offset="0" stop-color="#ffe083"/><stop offset="1" stop-color="#f8bf3e"/></linearGradient></defs><path d="M0 0.8 Q0 0 0.8 0 L8.6 0 L10.6 2.6 L25 2.6 L25 19.4 L0 19.4 Z" fill="#efb025"/><path d="M0 3.6 L25 3.6 L25 19.4 L0 19.4 Z" fill="url(#fg0)"/><rect x="0" y="18.6" width="25" height="0.8" fill="#eaa520"/></svg>
<div class="t" style="left:105px;top:1002.72px;font-size:20.2px;line-height:22.56px;font-weight:400;color:#202020;">temp</div>
<div class="t" style="left:277px;top:1003.08px;font-size:19.8px;line-height:22.12px;font-weight:400;color:#202020;">C:\temp\</div>
<div class="a" style="left:638px;top:1035.9499999999998px;width:143px;height:46px;background:#f7f7f7"></div>
<svg class="a" style="left:69px;top:1049.25px" width="25" height="19" viewBox="0 0 25 19.4" preserveAspectRatio="none"><defs><linearGradient id="fg1" x1="0" y1="0" x2="1" y2="1"><stop offset="0" stop-color="#fff1cf"/><stop offset="1" stop-color="#fde3a6"/></linearGradient></defs><path d="M0 0.8 Q0 0 0.8 0 L8.6 0 L10.6 2.6 L25 2.6 L25 19.4 L0 19.4 Z" fill="#f9dc98"/><path d="M0 3.6 L25 3.6 L25 19.4 L0 19.4 Z" fill="url(#fg1)"/><rect x="0" y="18.6" width="25" height="0.8" fill="#f6d48a"/></svg><svg class="a" style="left:70.5px;top:1063.95px" width="19" height="17" viewBox="0 0 19 17"><path d="M9.5 1.2 L17.8 15.6 L1.2 15.6 Z" fill="#f7c542" stroke="#c27a1e" stroke-width="1.6" stroke-linejoin="round"/><rect x="8.5" y="5.5" width="2" height="5.5" rx="0.8" fill="#1a1a1a"/><circle cx="9.5" cy="13" r="1.1" fill="#1a1a1a"/></svg>
<div class="t" style="left:105px;top:1048.77px;font-size:20.2px;line-height:22.56px;font-weight:400;color:#202020;">Config.Msi</div>
<div class="t" style="left:277px;top:1049.13px;font-size:19.8px;line-height:22.12px;font-weight:400;color:#202020;">C:\Config.Msi\</div>
<div class="a" style="left:638px;top:1082.0px;width:143px;height:46px;background:#f7f7f7"></div>
<svg class="a" style="left:69px;top:1095.30px" width="25" height="19" viewBox="0 0 25 19.4" preserveAspectRatio="none"><defs><linearGradient id="fg1" x1="0" y1="0" x2="1" y2="1"><stop offset="0" stop-color="#fff1cf"/><stop offset="1" stop-color="#fde3a6"/></linearGradient></defs><path d="M0 0.8 Q0 0 0.8 0 L8.6 0 L10.6 2.6 L25 2.6 L25 19.4 L0 19.4 Z" fill="#f9dc98"/><path d="M0 3.6 L25 3.6 L25 19.4 L0 19.4 Z" fill="url(#fg1)"/><rect x="0" y="18.6" width="25" height="0.8" fill="#f6d48a"/></svg><svg class="a" style="left:67px;top:1109.0px" width="14" height="14" viewBox="0 0 14 14"><rect x="0.5" y="0.5" width="13" height="13" fill="#fff" stroke="#b8c8d8" stroke-width="1"/><path d="M3.5 10.5 L10 4 M5.5 4 L10 4 L10 8.5" fill="none" stroke="#1a7ad8" stroke-width="1.6"/></svg>
<div class="t" style="left:105px;top:1094.82px;font-size:20.2px;line-height:22.56px;font-weight:400;color:#202020;">Dokumente un...</div>
<div class="t" style="left:277px;top:1095.18px;font-size:19.8px;line-height:22.12px;font-weight:400;color:#202020;">C:\Dokumente und Ei...</div>
<div class="a" style="left:638px;top:1128.05px;width:143px;height:46px;background:#f7f7f7"></div>
<svg class="a" style="left:69px;top:1141.35px" width="25" height="19" viewBox="0 0 25 19.4" preserveAspectRatio="none"><defs><linearGradient id="fg0" x1="0" y1="0" x2="1" y2="1"><stop offset="0" stop-color="#ffe083"/><stop offset="1" stop-color="#f8bf3e"/></linearGradient></defs><path d="M0 0.8 Q0 0 0.8 0 L8.6 0 L10.6 2.6 L25 2.6 L25 19.4 L0 19.4 Z" fill="#efb025"/><path d="M0 3.6 L25 3.6 L25 19.4 L0 19.4 Z" fill="url(#fg0)"/><rect x="0" y="18.6" width="25" height="0.8" fill="#eaa520"/></svg>
<div class="t" style="left:105px;top:1140.87px;font-size:20.2px;line-height:22.56px;font-weight:400;color:#202020;">inetpub</div>
<div class="t" style="left:277px;top:1141.23px;font-size:19.8px;line-height:22.12px;font-weight:400;color:#202020;">C:\inetpub\</div>
<div class="a" style="left:638px;top:1174.1px;width:143px;height:46px;background:#f7f7f7"></div>
<svg class="a" style="left:69px;top:1187.40px" width="25" height="19" viewBox="0 0 25 19.4" preserveAspectRatio="none"><defs><linearGradient id="fg1" x1="0" y1="0" x2="1" y2="1"><stop offset="0" stop-color="#fff1cf"/><stop offset="1" stop-color="#fde3a6"/></linearGradient></defs><path d="M0 0.8 Q0 0 0.8 0 L8.6 0 L10.6 2.6 L25 2.6 L25 19.4 L0 19.4 Z" fill="#f9dc98"/><path d="M0 3.6 L25 3.6 L25 19.4 L0 19.4 Z" fill="url(#fg1)"/><rect x="0" y="18.6" width="25" height="0.8" fill="#f6d48a"/></svg>
<div class="t" style="left:105px;top:1186.92px;font-size:20.2px;line-height:22.56px;font-weight:400;color:#202020;">OneDriveTemp</div>
<div class="t" style="left:277px;top:1187.28px;font-size:19.8px;line-height:22.12px;font-weight:400;color:#202020;">C:\OneDriveTemp\</div>
<div class="a" style="left:638px;top:1220.1499999999999px;width:143px;height:46px;background:#f7f7f7"></div>
<svg class="a" style="left:69px;top:1233.45px" width="25" height="19" viewBox="0 0 25 19.4" preserveAspectRatio="none"><defs><linearGradient id="fg0" x1="0" y1="0" x2="1" y2="1"><stop offset="0" stop-color="#ffe083"/><stop offset="1" stop-color="#f8bf3e"/></linearGradient></defs><path d="M0 0.8 Q0 0 0.8 0 L8.6 0 L10.6 2.6 L25 2.6 L25 19.4 L0 19.4 Z" fill="#efb025"/><path d="M0 3.6 L25 3.6 L25 19.4 L0 19.4 Z" fill="url(#fg0)"/><rect x="0" y="18.6" width="25" height="0.8" fill="#eaa520"/></svg><svg class="a" style="left:70.5px;top:1248.15px" width="19" height="17" viewBox="0 0 19 17"><path d="M9.5 1.2 L17.8 15.6 L1.2 15.6 Z" fill="#f7c542" stroke="#c27a1e" stroke-width="1.6" stroke-linejoin="round"/><rect x="8.5" y="5.5" width="2" height="5.5" rx="0.8" fill="#1a1a1a"/><circle cx="9.5" cy="13" r="1.1" fill="#1a1a1a"/></svg>
<div class="t" style="left:105px;top:1232.97px;font-size:20.2px;line-height:22.56px;font-weight:400;color:#202020;">PerfLogs</div>
<div class="t" style="left:277px;top:1233.33px;font-size:19.8px;line-height:22.12px;font-weight:400;color:#202020;">C:\PerfLogs\</div>
<div class="a" style="left:485px;top:327px;width:1470px;height:1123px;background:#fff;border-radius:26px;overflow:hidden">
<div class="a" style="left:-485px;top:-327px;width:2000px;height:1500px">
<div class="a" style="left:498px;top:332px;width:2px;height:1130px;background:#dadada"></div>
<div class="a" style="left:1010px;top:331px;width:1.5px;height:49px;background:#e2e2e2"></div>
<div class="a" style="left:1563px;top:331px;width:1.5px;height:49px;background:#e2e2e2"></div>
<div class="a" style="left:1658px;top:331px;width:1.5px;height:49px;background:#e2e2e2"></div>
<div class="a" style="left:1806px;top:331px;width:1.5px;height:49px;background:#e2e2e2"></div>
<div class="a" style="left:510px;top:345px;width:23px;height:23px;background:#f3f3f3;border:1.8px solid #7e7e7e;border-radius:5px"></div>
<div class="t" style="left:539px;top:345.25px;font-size:20.5px;line-height:22.90px;font-weight:400;color:#1a1a1a;">Name</div>
<div class="t" style="left:1019px;top:345.25px;font-size:20.5px;line-height:22.90px;font-weight:400;color:#1a1a1a;">Folder Path</div>
<div class="t" style="right:348px;top:345.25px;font-size:20.5px;line-height:22.90px;font-weight:400;color:#1a1a1a;">Files</div>
<div class="t" style="right:200px;top:345.25px;font-size:20.5px;line-height:22.90px;font-weight:400;color:#1a1a1a;">Size</div>
<div class="t" style="left:1815px;top:345.25px;font-size:20.5px;line-height:22.90px;font-weight:400;color:#1a1a1a;">Last Modified</div>
<div class="a" style="left:1010px;top:380px;width:1.5px;height:1080px;background:#e6e6e6;z-index:0"></div>
<div class="a" style="left:505px;top:380.30px;width:1460px;height:47.05px;background:#abc1d0;border-top:1.5px solid #1f2124"></div>
<div class="a" style="left:1010px;top:381.80px;width:1.5px;height:46.25px;background:#d0dbe3"></div>
<svg class="a" style="left:521px;top:399.30px" width="16" height="10" viewBox="0 0 16 10"><path d="M1 1.5 L8 8.5 L15 1.5" fill="none" stroke="#2b2b2b" stroke-width="1.9"/></svg>
<div class="a" style="left:547.3px;top:393.0px;width:23px;height:23px;background:#f3f3f3;border:1.8px solid #7e7e7e;border-radius:5px"></div>
<svg class="a" style="left:577px;top:392.0px" width="20" height="26" viewBox="0 0 20 26"><path d="M0.75 0.75 L12.6 0.75 L18.45 6.6 L18.45 24.75 L0.75 24.75 Z" fill="#fbfbfb" stroke="#858585" stroke-width="1.4" stroke-linejoin="round"/><path d="M12.6 0.75 L12.6 5.2 Q12.6 6.6 14 6.6 L18.45 6.6" fill="none" stroke="#858585" stroke-width="1.3"/><path d="M8.00 6.70 L8.56 5.53 L9.84 5.87 L9.76 7.16 L10.55 7.75 L11.77 7.33 L12.43 8.46 L11.46 9.32 L11.60 10.30 L12.77 10.86 L12.43 12.14 L11.14 12.06 L10.55 12.85 L10.97 14.07 L9.84 14.73 L8.98 13.76 L8.00 13.90 L7.44 15.07 L6.16 14.73 L6.24 13.44 L5.45 12.85 L4.23 13.27 L3.57 12.14 L4.54 11.28 L4.40 10.30 L3.23 9.74 L3.57 8.46 L4.86 8.54 L5.45 7.75 L5.03 6.53 L6.16 5.87 L7.02 6.84 Z M9.50 10.30 A1.5 1.5 0 1 0 6.50 10.30 A1.5 1.5 0 1 0 9.50 10.30 Z" fill="#98b3c6" fill-rule="evenodd"/><path d="M12.90 14.60 L13.45 13.94 L14.65 14.37 L14.66 15.22 L15.32 16.00 L16.17 16.15 L16.40 17.40 L15.67 17.84 L15.32 18.80 L15.62 19.60 L14.65 20.43 L13.90 20.01 L12.90 20.20 L12.35 20.86 L11.15 20.43 L11.14 19.58 L10.48 18.80 L9.63 18.65 L9.40 17.40 L10.13 16.96 L10.48 16.00 L10.18 15.20 L11.15 14.37 L11.90 14.79 Z M14.20 17.40 A1.3 1.3 0 1 0 11.60 17.40 A1.3 1.3 0 1 0 14.20 17.40 Z" fill="#4d525c" fill-rule="evenodd"/></svg>
<div class="t" style="left:612px;top:394.32px;font-size:20.2px;line-height:22.56px;font-weight:700;color:#0d0d0d;">svml_dispmd.dll</div>
<div class="t" style="left:1025px;top:393.41px;font-size:21.2px;line-height:23.68px;font-weight:700;color:#0d0d0d;">[multiple]</div>
<div class="t" style="right:348px;top:393.96px;font-size:20.6px;line-height:23.01px;font-weight:700;color:#0d0d0d;">9</div>
<div class="t" style="right:200px;top:393.96px;font-size:20.6px;line-height:23.01px;font-weight:700;color:#0d0d0d;">162,4 MB</div>
<div class="t" style="left:1822px;top:393.41px;font-size:21.2px;line-height:23.68px;font-weight:700;color:#0d0d0d;">[multiple]</div>
<div class="a" style="left:578.6px;top:440.15px;width:23px;height:23px;background:#f3f3f3;border:1.8px solid #7e7e7e;border-radius:5px"></div>
<svg class="a" style="left:608.6px;top:439.25px" width="20" height="26" viewBox="0 0 20 26"><path d="M0.75 0.75 L12.6 0.75 L18.45 6.6 L18.45 24.75 L0.75 24.75 Z" fill="#fbfbfb" stroke="#858585" stroke-width="1.4" stroke-linejoin="round"/><path d="M12.6 0.75 L12.6 5.2 Q12.6 6.6 14 6.6 L18.45 6.6" fill="none" stroke="#858585" stroke-width="1.3"/><path d="M8.00 6.70 L8.56 5.53 L9.84 5.87 L9.76 7.16 L10.55 7.75 L11.77 7.33 L12.43 8.46 L11.46 9.32 L11.60 10.30 L12.77 10.86 L12.43 12.14 L11.14 12.06 L10.55 12.85 L10.97 14.07 L9.84 14.73 L8.98 13.76 L8.00 13.90 L7.44 15.07 L6.16 14.73 L6.24 13.44 L5.45 12.85 L4.23 13.27 L3.57 12.14 L4.54 11.28 L4.40 10.30 L3.23 9.74 L3.57 8.46 L4.86 8.54 L5.45 7.75 L5.03 6.53 L6.16 5.87 L7.02 6.84 Z M9.50 10.30 A1.5 1.5 0 1 0 6.50 10.30 A1.5 1.5 0 1 0 9.50 10.30 Z" fill="#98b3c6" fill-rule="evenodd"/><path d="M12.90 14.60 L13.45 13.94 L14.65 14.37 L14.66 15.22 L15.32 16.00 L16.17 16.15 L16.40 17.40 L15.67 17.84 L15.32 18.80 L15.62 19.60 L14.65 20.43 L13.90 20.01 L12.90 20.20 L12.35 20.86 L11.15 20.43 L11.14 19.58 L10.48 18.80 L9.63 18.65 L9.40 17.40 L10.13 16.96 L10.48 16.00 L10.18 15.20 L11.15 14.37 L11.90 14.79 Z M14.20 17.40 A1.3 1.3 0 1 0 11.60 17.40 A1.3 1.3 0 1 0 14.20 17.40 Z" fill="#4d525c" fill-rule="evenodd"/></svg>
<div class="t" style="left:643px;top:441.77px;font-size:20.2px;line-height:22.56px;font-weight:400;color:#202020;">svml_dispmd.dll</div>
<div class="t" style="left:1025px;top:441.23px;font-size:20.8px;line-height:23.23px;font-weight:400;color:#202020;">C:\Program Files\Adobe\Adobe Media Encoder 2024\</div>
<div class="t" style="right:348px;top:441.77px;font-size:20.2px;line-height:22.56px;font-weight:400;color:#202020;">1</div>
<div class="t" style="right:200px;top:442.13px;font-size:19.8px;line-height:22.12px;font-weight:400;color:#202020;">18,0 MB</div>
<div class="t" style="left:1822px;top:441.77px;font-size:20.2px;line-height:22.56px;font-weight:400;color:#202020;">30.09.2024</div>
<div class="a" style="left:578.6px;top:487.6px;width:23px;height:23px;background:#f3f3f3;border:1.8px solid #7e7e7e;border-radius:5px"></div>
<svg class="a" style="left:608.6px;top:486.70000000000005px" width="20" height="26" viewBox="0 0 20 26"><path d="M0.75 0.75 L12.6 0.75 L18.45 6.6 L18.45 24.75 L0.75 24.75 Z" fill="#fbfbfb" stroke="#858585" stroke-width="1.4" stroke-linejoin="round"/><path d="M12.6 0.75 L12.6 5.2 Q12.6 6.6 14 6.6 L18.45 6.6" fill="none" stroke="#858585" stroke-width="1.3"/><path d="M8.00 6.70 L8.56 5.53 L9.84 5.87 L9.76 7.16 L10.55 7.75 L11.77 7.33 L12.43 8.46 L11.46 9.32 L11.60 10.30 L12.77 10.86 L12.43 12.14 L11.14 12.06 L10.55 12.85 L10.97 14.07 L9.84 14.73 L8.98 13.76 L8.00 13.90 L7.44 15.07 L6.16 14.73 L6.24 13.44 L5.45 12.85 L4.23 13.27 L3.57 12.14 L4.54 11.28 L4.40 10.30 L3.23 9.74 L3.57 8.46 L4.86 8.54 L5.45 7.75 L5.03 6.53 L6.16 5.87 L7.02 6.84 Z M9.50 10.30 A1.5 1.5 0 1 0 6.50 10.30 A1.5 1.5 0 1 0 9.50 10.30 Z" fill="#98b3c6" fill-rule="evenodd"/><path d="M12.90 14.60 L13.45 13.94 L14.65 14.37 L14.66 15.22 L15.32 16.00 L16.17 16.15 L16.40 17.40 L15.67 17.84 L15.32 18.80 L15.62 19.60 L14.65 20.43 L13.90 20.01 L12.90 20.20 L12.35 20.86 L11.15 20.43 L11.14 19.58 L10.48 18.80 L9.63 18.65 L9.40 17.40 L10.13 16.96 L10.48 16.00 L10.18 15.20 L11.15 14.37 L11.90 14.79 Z M14.20 17.40 A1.3 1.3 0 1 0 11.60 17.40 A1.3 1.3 0 1 0 14.20 17.40 Z" fill="#4d525c" fill-rule="evenodd"/></svg>
<div class="t" style="left:643px;top:489.22px;font-size:20.2px;line-height:22.56px;font-weight:400;color:#202020;">svml_dispmd.dll</div>
<div class="t" style="left:1025px;top:488.68px;font-size:20.8px;line-height:23.23px;font-weight:400;color:#202020;">C:\Program Files\Adobe\Adobe Media Encoder 2025\</div>
<div class="t" style="right:348px;top:489.22px;font-size:20.2px;line-height:22.56px;font-weight:400;color:#202020;">1</div>
<div class="t" style="right:200px;top:489.58px;font-size:19.8px;line-height:22.12px;font-weight:400;color:#202020;">18,0 MB</div>
<div class="t" style="left:1822px;top:489.22px;font-size:20.2px;line-height:22.56px;font-weight:400;color:#202020;">01.04.2025</div>
<div class="a" style="left:578.6px;top:535.0500000000001px;width:23px;height:23px;background:#f3f3f3;border:1.8px solid #7e7e7e;border-radius:5px"></div>
<svg class="a" style="left:608.6px;top:534.1500000000001px" width="20" height="26" viewBox="0 0 20 26"><path d="M0.75 0.75 L12.6 0.75 L18.45 6.6 L18.45 24.75 L0.75 24.75 Z" fill="#fbfbfb" stroke="#858585" stroke-width="1.4" stroke-linejoin="round"/><path d="M12.6 0.75 L12.6 5.2 Q12.6 6.6 14 6.6 L18.45 6.6" fill="none" stroke="#858585" stroke-width="1.3"/><path d="M8.00 6.70 L8.56 5.53 L9.84 5.87 L9.76 7.16 L10.55 7.75 L11.77 7.33 L12.43 8.46 L11.46 9.32 L11.60 10.30 L12.77 10.86 L12.43 12.14 L11.14 12.06 L10.55 12.85 L10.97 14.07 L9.84 14.73 L8.98 13.76 L8.00 13.90 L7.44 15.07 L6.16 14.73 L6.24 13.44 L5.45 12.85 L4.23 13.27 L3.57 12.14 L4.54 11.28 L4.40 10.30 L3.23 9.74 L3.57 8.46 L4.86 8.54 L5.45 7.75 L5.03 6.53 L6.16 5.87 L7.02 6.84 Z M9.50 10.30 A1.5 1.5 0 1 0 6.50 10.30 A1.5 1.5 0 1 0 9.50 10.30 Z" fill="#98b3c6" fill-rule="evenodd"/><path d="M12.90 14.60 L13.45 13.94 L14.65 14.37 L14.66 15.22 L15.32 16.00 L16.17 16.15 L16.40 17.40 L15.67 17.84 L15.32 18.80 L15.62 19.60 L14.65 20.43 L13.90 20.01 L12.90 20.20 L12.35 20.86 L11.15 20.43 L11.14 19.58 L10.48 18.80 L9.63 18.65 L9.40 17.40 L10.13 16.96 L10.48 16.00 L10.18 15.20 L11.15 14.37 L11.90 14.79 Z M14.20 17.40 A1.3 1.3 0 1 0 11.60 17.40 A1.3 1.3 0 1 0 14.20 17.40 Z" fill="#4d525c" fill-rule="evenodd"/></svg>
<div class="t" style="left:643px;top:536.67px;font-size:20.2px;line-height:22.56px;font-weight:400;color:#202020;">svml_dispmd.dll</div>
<div class="t" style="left:1025px;top:536.13px;font-size:20.8px;line-height:23.23px;font-weight:400;color:#202020;">C:\Program Files\Adobe\Adobe After Effects 2024\Supp...</div>
<div class="t" style="right:348px;top:536.67px;font-size:20.2px;line-height:22.56px;font-weight:400;color:#202020;">1</div>
<div class="t" style="right:200px;top:537.03px;font-size:19.8px;line-height:22.12px;font-weight:400;color:#202020;">18,0 MB</div>
<div class="t" style="left:1822px;top:536.67px;font-size:20.2px;line-height:22.56px;font-weight:400;color:#202020;">17.10.2024</div>
<div class="a" style="left:578.6px;top:582.5px;width:23px;height:23px;background:#f3f3f3;border:1.8px solid #7e7e7e;border-radius:5px"></div>
<svg class="a" style="left:608.6px;top:581.6px" width="20" height="26" viewBox="0 0 20 26"><path d="M0.75 0.75 L12.6 0.75 L18.45 6.6 L18.45 24.75 L0.75 24.75 Z" fill="#fbfbfb" stroke="#858585" stroke-width="1.4" stroke-linejoin="round"/><path d="M12.6 0.75 L12.6 5.2 Q12.6 6.6 14 6.6 L18.45 6.6" fill="none" stroke="#858585" stroke-width="1.3"/><path d="M8.00 6.70 L8.56 5.53 L9.84 5.87 L9.76 7.16 L10.55 7.75 L11.77 7.33 L12.43 8.46 L11.46 9.32 L11.60 10.30 L12.77 10.86 L12.43 12.14 L11.14 12.06 L10.55 12.85 L10.97 14.07 L9.84 14.73 L8.98 13.76 L8.00 13.90 L7.44 15.07 L6.16 14.73 L6.24 13.44 L5.45 12.85 L4.23 13.27 L3.57 12.14 L4.54 11.28 L4.40 10.30 L3.23 9.74 L3.57 8.46 L4.86 8.54 L5.45 7.75 L5.03 6.53 L6.16 5.87 L7.02 6.84 Z M9.50 10.30 A1.5 1.5 0 1 0 6.50 10.30 A1.5 1.5 0 1 0 9.50 10.30 Z" fill="#98b3c6" fill-rule="evenodd"/><path d="M12.90 14.60 L13.45 13.94 L14.65 14.37 L14.66 15.22 L15.32 16.00 L16.17 16.15 L16.40 17.40 L15.67 17.84 L15.32 18.80 L15.62 19.60 L14.65 20.43 L13.90 20.01 L12.90 20.20 L12.35 20.86 L11.15 20.43 L11.14 19.58 L10.48 18.80 L9.63 18.65 L9.40 17.40 L10.13 16.96 L10.48 16.00 L10.18 15.20 L11.15 14.37 L11.90 14.79 Z M14.20 17.40 A1.3 1.3 0 1 0 11.60 17.40 A1.3 1.3 0 1 0 14.20 17.40 Z" fill="#4d525c" fill-rule="evenodd"/></svg>
<div class="t" style="left:643px;top:584.12px;font-size:20.2px;line-height:22.56px;font-weight:400;color:#202020;">svml_dispmd.dll</div>
<div class="t" style="left:1025px;top:583.58px;font-size:20.8px;line-height:23.23px;font-weight:400;color:#202020;">C:\Program Files\Adobe\Adobe Premiere Pro 2025\</div>
<div class="t" style="right:348px;top:584.12px;font-size:20.2px;line-height:22.56px;font-weight:400;color:#202020;">1</div>
<div class="t" style="right:200px;top:584.48px;font-size:19.8px;line-height:22.12px;font-weight:400;color:#202020;">18,0 MB</div>
<div class="t" style="left:1822px;top:584.12px;font-size:20.2px;line-height:22.56px;font-weight:400;color:#202020;">30.04.2025</div>
<div class="a" style="left:578.6px;top:629.9499999999999px;width:23px;height:23px;background:#f3f3f3;border:1.8px solid #7e7e7e;border-radius:5px"></div>
<svg class="a" style="left:608.6px;top:629.05px" width="20" height="26" viewBox="0 0 20 26"><path d="M0.75 0.75 L12.6 0.75 L18.45 6.6 L18.45 24.75 L0.75 24.75 Z" fill="#fbfbfb" stroke="#858585" stroke-width="1.4" stroke-linejoin="round"/><path d="M12.6 0.75 L12.6 5.2 Q12.6 6.6 14 6.6 L18.45 6.6" fill="none" stroke="#858585" stroke-width="1.3"/><path d="M8.00 6.70 L8.56 5.53 L9.84 5.87 L9.76 7.16 L10.55 7.75 L11.77 7.33 L12.43 8.46 L11.46 9.32 L11.60 10.30 L12.77 10.86 L12.43 12.14 L11.14 12.06 L10.55 12.85 L10.97 14.07 L9.84 14.73 L8.98 13.76 L8.00 13.90 L7.44 15.07 L6.16 14.73 L6.24 13.44 L5.45 12.85 L4.23 13.27 L3.57 12.14 L4.54 11.28 L4.40 10.30 L3.23 9.74 L3.57 8.46 L4.86 8.54 L5.45 7.75 L5.03 6.53 L6.16 5.87 L7.02 6.84 Z M9.50 10.30 A1.5 1.5 0 1 0 6.50 10.30 A1.5 1.5 0 1 0 9.50 10.30 Z" fill="#98b3c6" fill-rule="evenodd"/><path d="M12.90 14.60 L13.45 13.94 L14.65 14.37 L14.66 15.22 L15.32 16.00 L16.17 16.15 L16.40 17.40 L15.67 17.84 L15.32 18.80 L15.62 19.60 L14.65 20.43 L13.90 20.01 L12.90 20.20 L12.35 20.86 L11.15 20.43 L11.14 19.58 L10.48 18.80 L9.63 18.65 L9.40 17.40 L10.13 16.96 L10.48 16.00 L10.18 15.20 L11.15 14.37 L11.90 14.79 Z M14.20 17.40 A1.3 1.3 0 1 0 11.60 17.40 A1.3 1.3 0 1 0 14.20 17.40 Z" fill="#4d525c" fill-rule="evenodd"/></svg>
<div class="t" style="left:643px;top:631.57px;font-size:20.2px;line-height:22.56px;font-weight:400;color:#202020;">svml_dispmd.dll</div>
<div class="t" style="left:1025px;top:631.03px;font-size:20.8px;line-height:23.23px;font-weight:400;color:#202020;">C:\Program Files\Adobe\Adobe Photoshop 2025\Requir...</div>
<div class="t" style="right:348px;top:631.57px;font-size:20.2px;line-height:22.56px;font-weight:400;color:#202020;">1</div>
<div class="t" style="right:200px;top:631.93px;font-size:19.8px;line-height:22.12px;font-weight:400;color:#202020;">18,0 MB</div>
<div class="t" style="left:1822px;top:631.57px;font-size:20.2px;line-height:22.56px;font-weight:400;color:#202020;">27.06.2025</div>
<div class="a" style="left:578.6px;top:677.4px;width:23px;height:23px;background:#f3f3f3;border:1.8px solid #7e7e7e;border-radius:5px"></div>
<svg class="a" style="left:608.6px;top:676.5px" width="20" height="26" viewBox="0 0 20 26"><path d="M0.75 0.75 L12.6 0.75 L18.45 6.6 L18.45 24.75 L0.75 24.75 Z" fill="#fbfbfb" stroke="#858585" stroke-width="1.4" stroke-linejoin="round"/><path d="M12.6 0.75 L12.6 5.2 Q12.6 6.6 14 6.6 L18.45 6.6" fill="none" stroke="#858585" stroke-width="1.3"/><path d="M8.00 6.70 L8.56 5.53 L9.84 5.87 L9.76 7.16 L10.55 7.75 L11.77 7.33 L12.43 8.46 L11.46 9.32 L11.60 10.30 L12.77 10.86 L12.43 12.14 L11.14 12.06 L10.55 12.85 L10.97 14.07 L9.84 14.73 L8.98 13.76 L8.00 13.90 L7.44 15.07 L6.16 14.73 L6.24 13.44 L5.45 12.85 L4.23 13.27 L3.57 12.14 L4.54 11.28 L4.40 10.30 L3.23 9.74 L3.57 8.46 L4.86 8.54 L5.45 7.75 L5.03 6.53 L6.16 5.87 L7.02 6.84 Z M9.50 10.30 A1.5 1.5 0 1 0 6.50 10.30 A1.5 1.5 0 1 0 9.50 10.30 Z" fill="#98b3c6" fill-rule="evenodd"/><path d="M12.90 14.60 L13.45 13.94 L14.65 14.37 L14.66 15.22 L15.32 16.00 L16.17 16.15 L16.40 17.40 L15.67 17.84 L15.32 18.80 L15.62 19.60 L14.65 20.43 L13.90 20.01 L12.90 20.20 L12.35 20.86 L11.15 20.43 L11.14 19.58 L10.48 18.80 L9.63 18.65 L9.40 17.40 L10.13 16.96 L10.48 16.00 L10.18 15.20 L11.15 14.37 L11.90 14.79 Z M14.20 17.40 A1.3 1.3 0 1 0 11.60 17.40 A1.3 1.3 0 1 0 14.20 17.40 Z" fill="#4d525c" fill-rule="evenodd"/></svg>
<div class="t" style="left:643px;top:679.02px;font-size:20.2px;line-height:22.56px;font-weight:400;color:#202020;">svml_dispmd.dll</div>
<div class="t" style="left:1025px;top:678.48px;font-size:20.8px;line-height:23.23px;font-weight:400;color:#202020;">C:\Program Files\Adobe\Adobe After Effects 2025\Supp...</div>
<div class="t" style="right:348px;top:679.02px;font-size:20.2px;line-height:22.56px;font-weight:400;color:#202020;">1</div>
<div class="t" style="right:200px;top:679.38px;font-size:19.8px;line-height:22.12px;font-weight:400;color:#202020;">18,0 MB</div>
<div class="t" style="left:1822px;top:679.02px;font-size:20.2px;line-height:22.56px;font-weight:400;color:#202020;">28.10.2024</div>
<div class="a" style="left:578.6px;top:724.85px;width:23px;height:23px;background:#f3f3f3;border:1.8px solid #7e7e7e;border-radius:5px"></div>
<svg class="a" style="left:608.6px;top:723.95px" width="20" height="26" viewBox="0 0 20 26"><path d="M0.75 0.75 L12.6 0.75 L18.45 6.6 L18.45 24.75 L0.75 24.75 Z" fill="#fbfbfb" stroke="#858585" stroke-width="1.4" stroke-linejoin="round"/><path d="M12.6 0.75 L12.6 5.2 Q12.6 6.6 14 6.6 L18.45 6.6" fill="none" stroke="#858585" stroke-width="1.3"/><path d="M8.00 6.70 L8.56 5.53 L9.84 5.87 L9.76 7.16 L10.55 7.75 L11.77 7.33 L12.43 8.46 L11.46 9.32 L11.60 10.30 L12.77 10.86 L12.43 12.14 L11.14 12.06 L10.55 12.85 L10.97 14.07 L9.84 14.73 L8.98 13.76 L8.00 13.90 L7.44 15.07 L6.16 14.73 L6.24 13.44 L5.45 12.85 L4.23 13.27 L3.57 12.14 L4.54 11.28 L4.40 10.30 L3.23 9.74 L3.57 8.46 L4.86 8.54 L5.45 7.75 L5.03 6.53 L6.16 5.87 L7.02 6.84 Z M9.50 10.30 A1.5 1.5 0 1 0 6.50 10.30 A1.5 1.5 0 1 0 9.50 10.30 Z" fill="#98b3c6" fill-rule="evenodd"/><path d="M12.90 14.60 L13.45 13.94 L14.65 14.37 L14.66 15.22 L15.32 16.00 L16.17 16.15 L16.40 17.40 L15.67 17.84 L15.32 18.80 L15.62 19.60 L14.65 20.43 L13.90 20.01 L12.90 20.20 L12.35 20.86 L11.15 20.43 L11.14 19.58 L10.48 18.80 L9.63 18.65 L9.40 17.40 L10.13 16.96 L10.48 16.00 L10.18 15.20 L11.15 14.37 L11.90 14.79 Z M14.20 17.40 A1.3 1.3 0 1 0 11.60 17.40 A1.3 1.3 0 1 0 14.20 17.40 Z" fill="#4d525c" fill-rule="evenodd"/></svg>
<div class="t" style="left:643px;top:726.47px;font-size:20.2px;line-height:22.56px;font-weight:400;color:#202020;">svml_dispmd.dll</div>
<div class="t" style="left:1025px;top:725.93px;font-size:20.8px;line-height:23.23px;font-weight:400;color:#202020;">C:\Program Files\Adobe\Adobe Photoshop 2024\Requir...</div>
<div class="t" style="right:348px;top:726.47px;font-size:20.2px;line-height:22.56px;font-weight:400;color:#202020;">1</div>
<div class="t" style="right:200px;top:726.83px;font-size:19.8px;line-height:22.12px;font-weight:400;color:#202020;">18,0 MB</div>
<div class="t" style="left:1822px;top:726.47px;font-size:20.2px;line-height:22.56px;font-weight:400;color:#202020;">30.04.2025</div>
<div class="a" style="left:578.6px;top:772.3000000000001px;width:23px;height:23px;background:#f3f3f3;border:1.8px solid #7e7e7e;border-radius:5px"></div>
<svg class="a" style="left:608.6px;top:771.4000000000001px" width="20" height="26" viewBox="0 0 20 26"><path d="M0.75 0.75 L12.6 0.75 L18.45 6.6 L18.45 24.75 L0.75 24.75 Z" fill="#fbfbfb" stroke="#858585" stroke-width="1.4" stroke-linejoin="round"/><path d="M12.6 0.75 L12.6 5.2 Q12.6 6.6 14 6.6 L18.45 6.6" fill="none" stroke="#858585" stroke-width="1.3"/><path d="M8.00 6.70 L8.56 5.53 L9.84 5.87 L9.76 7.16 L10.55 7.75 L11.77 7.33 L12.43 8.46 L11.46 9.32 L11.60 10.30 L12.77 10.86 L12.43 12.14 L11.14 12.06 L10.55 12.85 L10.97 14.07 L9.84 14.73 L8.98 13.76 L8.00 13.90 L7.44 15.07 L6.16 14.73 L6.24 13.44 L5.45 12.85 L4.23 13.27 L3.57 12.14 L4.54 11.28 L4.40 10.30 L3.23 9.74 L3.57 8.46 L4.86 8.54 L5.45 7.75 L5.03 6.53 L6.16 5.87 L7.02 6.84 Z M9.50 10.30 A1.5 1.5 0 1 0 6.50 10.30 A1.5 1.5 0 1 0 9.50 10.30 Z" fill="#98b3c6" fill-rule="evenodd"/><path d="M12.90 14.60 L13.45 13.94 L14.65 14.37 L14.66 15.22 L15.32 16.00 L16.17 16.15 L16.40 17.40 L15.67 17.84 L15.32 18.80 L15.62 19.60 L14.65 20.43 L13.90 20.01 L12.90 20.20 L12.35 20.86 L11.15 20.43 L11.14 19.58 L10.48 18.80 L9.63 18.65 L9.40 17.40 L10.13 16.96 L10.48 16.00 L10.18 15.20 L11.15 14.37 L11.90 14.79 Z M14.20 17.40 A1.3 1.3 0 1 0 11.60 17.40 A1.3 1.3 0 1 0 14.20 17.40 Z" fill="#4d525c" fill-rule="evenodd"/></svg>
<div class="t" style="left:643px;top:773.92px;font-size:20.2px;line-height:22.56px;font-weight:400;color:#202020;">svml_dispmd.dll</div>
<div class="t" style="left:1025px;top:773.38px;font-size:20.8px;line-height:23.23px;font-weight:400;color:#202020;">C:\Program Files\Adobe\Adobe Photoshop 2024\Requir...</div>
<div class="t" style="right:348px;top:773.92px;font-size:20.2px;line-height:22.56px;font-weight:400;color:#202020;">1</div>
<div class="t" style="right:200px;top:774.28px;font-size:19.8px;line-height:22.12px;font-weight:400;color:#202020;">18,0 MB</div>
<div class="t" style="left:1822px;top:773.92px;font-size:20.2px;line-height:22.56px;font-weight:400;color:#202020;">30.04.2025</div>
<div class="a" style="left:578.6px;top:819.75px;width:23px;height:23px;background:#f3f3f3;border:1.8px solid #7e7e7e;border-radius:5px"></div>
<svg class="a" style="left:608.6px;top:818.85px" width="20" height="26" viewBox="0 0 20 26"><path d="M0.75 0.75 L12.6 0.75 L18.45 6.6 L18.45 24.75 L0.75 24.75 Z" fill="#fbfbfb" stroke="#858585" stroke-width="1.4" stroke-linejoin="round"/><path d="M12.6 0.75 L12.6 5.2 Q12.6 6.6 14 6.6 L18.45 6.6" fill="none" stroke="#858585" stroke-width="1.3"/><path d="M8.00 6.70 L8.56 5.53 L9.84 5.87 L9.76 7.16 L10.55 7.75 L11.77 7.33 L12.43 8.46 L11.46 9.32 L11.60 10.30 L12.77 10.86 L12.43 12.14 L11.14 12.06 L10.55 12.85 L10.97 14.07 L9.84 14.73 L8.98 13.76 L8.00 13.90 L7.44 15.07 L6.16 14.73 L6.24 13.44 L5.45 12.85 L4.23 13.27 L3.57 12.14 L4.54 11.28 L4.40 10.30 L3.23 9.74 L3.57 8.46 L4.86 8.54 L5.45 7.75 L5.03 6.53 L6.16 5.87 L7.02 6.84 Z M9.50 10.30 A1.5 1.5 0 1 0 6.50 10.30 A1.5 1.5 0 1 0 9.50 10.30 Z" fill="#98b3c6" fill-rule="evenodd"/><path d="M12.90 14.60 L13.45 13.94 L14.65 14.37 L14.66 15.22 L15.32 16.00 L16.17 16.15 L16.40 17.40 L15.67 17.84 L15.32 18.80 L15.62 19.60 L14.65 20.43 L13.90 20.01 L12.90 20.20 L12.35 20.86 L11.15 20.43 L11.14 19.58 L10.48 18.80 L9.63 18.65 L9.40 17.40 L10.13 16.96 L10.48 16.00 L10.18 15.20 L11.15 14.37 L11.90 14.79 Z M14.20 17.40 A1.3 1.3 0 1 0 11.60 17.40 A1.3 1.3 0 1 0 14.20 17.40 Z" fill="#4d525c" fill-rule="evenodd"/></svg>
<div class="t" style="left:643px;top:821.37px;font-size:20.2px;line-height:22.56px;font-weight:400;color:#202020;">svml_dispmd.dll</div>
<div class="t" style="left:1025px;top:820.83px;font-size:20.8px;line-height:23.23px;font-weight:400;color:#202020;">C:\Program Files\Adobe\Adobe Premiere Pro 2024\</div>
<div class="t" style="right:348px;top:821.37px;font-size:20.2px;line-height:22.56px;font-weight:400;color:#202020;">1</div>
<div class="t" style="right:200px;top:821.73px;font-size:19.8px;line-height:22.12px;font-weight:400;color:#202020;">18,0 MB</div>
<div class="t" style="left:1822px;top:821.37px;font-size:20.2px;line-height:22.56px;font-weight:400;color:#202020;">30.09.2024</div>
<div class="a" style="left:505px;top:854.80px;width:1460px;height:47.05px;background:#abc1d0;border-top:1.5px solid #1f2124"></div>
<div class="a" style="left:1010px;top:856.30px;width:1.5px;height:46.25px;background:#d0dbe3"></div>
<svg class="a" style="left:521px;top:873.80px" width="16" height="10" viewBox="0 0 16 10"><path d="M1 1.5 L8 8.5 L15 1.5" fill="none" stroke="#2b2b2b" stroke-width="1.9"/></svg>
<div class="a" style="left:547.3px;top:867.5px;width:23px;height:23px;background:#f3f3f3;border:1.8px solid #7e7e7e;border-radius:5px"></div>
<svg class="a" style="left:577px;top:866.5px" width="20" height="26" viewBox="0 0 20 26"><path d="M0.75 0.75 L12.6 0.75 L18.45 6.6 L18.45 24.75 L0.75 24.75 Z" fill="#fbfbfb" stroke="#8a8a8a" stroke-width="1.4" stroke-linejoin="round"/><path d="M12.6 0.75 L12.6 5.2 Q12.6 6.6 14 6.6 L18.45 6.6" fill="none" stroke="#8a8a8a" stroke-width="1.3"/></svg>
<div class="t" style="left:612px;top:868.82px;font-size:20.2px;line-height:22.56px;font-weight:700;color:#0d0d0d;">shell32.dll.mun</div>
<div class="t" style="left:1025px;top:867.91px;font-size:21.2px;line-height:23.68px;font-weight:700;color:#0d0d0d;">[multiple]</div>
<div class="t" style="right:348px;top:868.46px;font-size:20.6px;line-height:23.01px;font-weight:700;color:#0d0d0d;">3</div>
<div class="t" style="right:200px;top:868.46px;font-size:20.6px;line-height:23.01px;font-weight:700;color:#0d0d0d;">54,0 MB</div>
<div class="t" style="left:1822px;top:867.91px;font-size:21.2px;line-height:23.68px;font-weight:700;color:#0d0d0d;">[multiple]</div>
<div class="a" style="left:578.6px;top:914.65px;width:23px;height:23px;background:#f3f3f3;border:1.8px solid #7e7e7e;border-radius:5px"></div>
<svg class="a" style="left:608.6px;top:913.75px" width="20" height="26" viewBox="0 0 20 26"><path d="M0.75 0.75 L12.6 0.75 L18.45 6.6 L18.45 24.75 L0.75 24.75 Z" fill="#fbfbfb" stroke="#8a8a8a" stroke-width="1.4" stroke-linejoin="round"/><path d="M12.6 0.75 L12.6 5.2 Q12.6 6.6 14 6.6 L18.45 6.6" fill="none" stroke="#8a8a8a" stroke-width="1.3"/></svg>
<div class="t" style="left:643px;top:916.27px;font-size:20.2px;line-height:22.56px;font-weight:400;color:#202020;">shell32.dll.mun</div>
<div class="t" style="left:1025px;top:915.73px;font-size:20.8px;line-height:23.23px;font-weight:400;color:#202020;">C:\Windows\SystemResources\</div>
<div class="t" style="right:348px;top:916.27px;font-size:20.2px;line-height:22.56px;font-weight:400;color:#202020;">1</div>
<div class="t" style="right:200px;top:916.63px;font-size:19.8px;line-height:22.12px;font-weight:400;color:#202020;">18,0 MB</div>
<div class="t" style="left:1822px;top:916.27px;font-size:20.2px;line-height:22.56px;font-weight:400;color:#202020;">16.07.2025</div>
<div class="a" style="left:578.6px;top:962.1px;width:23px;height:23px;background:#f3f3f3;border:1.8px solid #7e7e7e;border-radius:5px"></div>
<svg class="a" style="left:608.6px;top:961.2px" width="20" height="26" viewBox="0 0 20 26"><path d="M0.75 0.75 L12.6 0.75 L18.45 6.6 L18.45 24.75 L0.75 24.75 Z" fill="#fbfbfb" stroke="#8a8a8a" stroke-width="1.4" stroke-linejoin="round"/><path d="M12.6 0.75 L12.6 5.2 Q12.6 6.6 14 6.6 L18.45 6.6" fill="none" stroke="#8a8a8a" stroke-width="1.3"/></svg>
<div class="t" style="left:643px;top:963.72px;font-size:20.2px;line-height:22.56px;font-weight:400;color:#202020;">shell32.dll.mun</div>
<div class="t" style="left:1025px;top:963.18px;font-size:20.8px;line-height:23.23px;font-weight:400;color:#202020;">C:\Windows\WinSxS\amd64_microsoft-windows-shell32...</div>
<div class="t" style="right:348px;top:963.72px;font-size:20.2px;line-height:22.56px;font-weight:400;color:#202020;">1</div>
<div class="t" style="right:200px;top:964.08px;font-size:19.8px;line-height:22.12px;font-weight:400;color:#202020;">18,0 MB</div>
<div class="t" style="left:1822px;top:963.72px;font-size:20.2px;line-height:22.56px;font-weight:400;color:#202020;">16.07.2025</div>
<div class="a" style="left:578.6px;top:1009.5500000000001px;width:23px;height:23px;background:#f3f3f3;border:1.8px solid #7e7e7e;border-radius:5px"></div>
<svg class="a" style="left:608.6px;top:1008.6500000000001px" width="20" height="26" viewBox="0 0 20 26"><path d="M0.75 0.75 L12.6 0.75 L18.45 6.6 L18.45 24.75 L0.75 24.75 Z" fill="#fbfbfb" stroke="#8a8a8a" stroke-width="1.4" stroke-linejoin="round"/><path d="M12.6 0.75 L12.6 5.2 Q12.6 6.6 14 6.6 L18.45 6.6" fill="none" stroke="#8a8a8a" stroke-width="1.3"/></svg>
<div class="t" style="left:643px;top:1011.17px;font-size:20.2px;line-height:22.56px;font-weight:400;color:#202020;">amd64_microsoft-windows-shell32_3...</div>
<div class="t" style="left:1025px;top:1010.63px;font-size:20.8px;line-height:23.23px;font-weight:400;color:#202020;">C:\Windows\WinSxS\Backup\</div>
<div class="t" style="right:348px;top:1011.17px;font-size:20.2px;line-height:22.56px;font-weight:400;color:#202020;">1</div>
<div class="t" style="right:200px;top:1011.53px;font-size:19.8px;line-height:22.12px;font-weight:400;color:#202020;">18,0 MB</div>
<div class="t" style="left:1822px;top:1011.17px;font-size:20.2px;line-height:22.56px;font-weight:400;color:#202020;">16.07.2025</div>
<div class="a" style="left:505px;top:1044.60px;width:1460px;height:47.05px;background:#abc1d0;border-top:1.5px solid #1f2124"></div>
<div class="a" style="left:1010px;top:1046.10px;width:1.5px;height:46.25px;background:#d0dbe3"></div>
<svg class="a" style="left:521px;top:1063.60px" width="16" height="10" viewBox="0 0 16 10"><path d="M1 1.5 L8 8.5 L15 1.5" fill="none" stroke="#2b2b2b" stroke-width="1.9"/></svg>
<div class="a" style="left:547.3px;top:1057.3000000000002px;width:23px;height:23px;background:#f3f3f3;border:1.8px solid #7e7e7e;border-radius:5px"></div>
<svg class="a" style="left:577px;top:1056.3000000000002px" width="20" height="26" viewBox="0 0 20 26"><path d="M0.75 0.75 L12.6 0.75 L18.45 6.6 L18.45 24.75 L0.75 24.75 Z" fill="#fbfbfb" stroke="#858585" stroke-width="1.4" stroke-linejoin="round"/><path d="M12.6 0.75 L12.6 5.2 Q12.6 6.6 14 6.6 L18.45 6.6" fill="none" stroke="#858585" stroke-width="1.3"/><path d="M8.00 6.70 L8.56 5.53 L9.84 5.87 L9.76 7.16 L10.55 7.75 L11.77 7.33 L12.43 8.46 L11.46 9.32 L11.60 10.30 L12.77 10.86 L12.43 12.14 L11.14 12.06 L10.55 12.85 L10.97 14.07 L9.84 14.73 L8.98 13.76 L8.00 13.90 L7.44 15.07 L6.16 14.73 L6.24 13.44 L5.45 12.85 L4.23 13.27 L3.57 12.14 L4.54 11.28 L4.40 10.30 L3.23 9.74 L3.57 8.46 L4.86 8.54 L5.45 7.75 L5.03 6.53 L6.16 5.87 L7.02 6.84 Z M9.50 10.30 A1.5 1.5 0 1 0 6.50 10.30 A1.5 1.5 0 1 0 9.50 10.30 Z" fill="#98b3c6" fill-rule="evenodd"/><path d="M12.90 14.60 L13.45 13.94 L14.65 14.37 L14.66 15.22 L15.32 16.00 L16.17 16.15 L16.40 17.40 L15.67 17.84 L15.32 18.80 L15.62 19.60 L14.65 20.43 L13.90 20.01 L12.90 20.20 L12.35 20.86 L11.15 20.43 L11.14 19.58 L10.48 18.80 L9.63 18.65 L9.40 17.40 L10.13 16.96 L10.48 16.00 L10.18 15.20 L11.15 14.37 L11.90 14.79 Z M14.20 17.40 A1.3 1.3 0 1 0 11.60 17.40 A1.3 1.3 0 1 0 14.20 17.40 Z" fill="#4d525c" fill-rule="evenodd"/></svg>
<div class="t" style="left:612px;top:1058.62px;font-size:20.2px;line-height:22.56px;font-weight:700;color:#0d0d0d;">mshtml.dll</div>
<div class="t" style="left:1025px;top:1057.71px;font-size:21.2px;line-height:23.68px;font-weight:700;color:#0d0d0d;">[multiple]</div>
<div class="t" style="right:348px;top:1058.26px;font-size:20.6px;line-height:23.01px;font-weight:700;color:#0d0d0d;">2</div>
<div class="t" style="right:200px;top:1058.26px;font-size:20.6px;line-height:23.01px;font-weight:700;color:#0d0d0d;">35,7 MB</div>
<div class="t" style="left:1822px;top:1058.26px;font-size:20.6px;line-height:23.01px;font-weight:700;color:#0d0d0d;">16.07.2025</div>
<div class="a" style="left:578.6px;top:1104.45px;width:23px;height:23px;background:#f3f3f3;border:1.8px solid #7e7e7e;border-radius:5px"></div>
<svg class="a" style="left:608.6px;top:1103.55px" width="20" height="26" viewBox="0 0 20 26"><path d="M0.75 0.75 L12.6 0.75 L18.45 6.6 L18.45 24.75 L0.75 24.75 Z" fill="#fbfbfb" stroke="#858585" stroke-width="1.4" stroke-linejoin="round"/><path d="M12.6 0.75 L12.6 5.2 Q12.6 6.6 14 6.6 L18.45 6.6" fill="none" stroke="#858585" stroke-width="1.3"/><path d="M8.00 6.70 L8.56 5.53 L9.84 5.87 L9.76 7.16 L10.55 7.75 L11.77 7.33 L12.43 8.46 L11.46 9.32 L11.60 10.30 L12.77 10.86 L12.43 12.14 L11.14 12.06 L10.55 12.85 L10.97 14.07 L9.84 14.73 L8.98 13.76 L8.00 13.90 L7.44 15.07 L6.16 14.73 L6.24 13.44 L5.45 12.85 L4.23 13.27 L3.57 12.14 L4.54 11.28 L4.40 10.30 L3.23 9.74 L3.57 8.46 L4.86 8.54 L5.45 7.75 L5.03 6.53 L6.16 5.87 L7.02 6.84 Z M9.50 10.30 A1.5 1.5 0 1 0 6.50 10.30 A1.5 1.5 0 1 0 9.50 10.30 Z" fill="#98b3c6" fill-rule="evenodd"/><path d="M12.90 14.60 L13.45 13.94 L14.65 14.37 L14.66 15.22 L15.32 16.00 L16.17 16.15 L16.40 17.40 L15.67 17.84 L15.32 18.80 L15.62 19.60 L14.65 20.43 L13.90 20.01 L12.90 20.20 L12.35 20.86 L11.15 20.43 L11.14 19.58 L10.48 18.80 L9.63 18.65 L9.40 17.40 L10.13 16.96 L10.48 16.00 L10.18 15.20 L11.15 14.37 L11.90 14.79 Z M14.20 17.40 A1.3 1.3 0 1 0 11.60 17.40 A1.3 1.3 0 1 0 14.20 17.40 Z" fill="#4d525c" fill-rule="evenodd"/></svg>
<div class="t" style="left:643px;top:1106.07px;font-size:20.2px;line-height:22.56px;font-weight:400;color:#202020;">mshtml.dll</div>
<div class="t" style="left:1025px;top:1105.53px;font-size:20.8px;line-height:23.23px;font-weight:400;color:#202020;">C:\Windows\WinSxS\wow64_microsoft-windows-i..tmlre...</div>
<div class="t" style="right:348px;top:1106.07px;font-size:20.2px;line-height:22.56px;font-weight:400;color:#202020;">1</div>
<div class="t" style="right:200px;top:1106.43px;font-size:19.8px;line-height:22.12px;font-weight:400;color:#202020;">17,9 MB</div>
<div class="t" style="left:1822px;top:1106.07px;font-size:20.2px;line-height:22.56px;font-weight:400;color:#202020;">16.07.2025</div>
<div class="a" style="left:578.6px;top:1151.9px;width:23px;height:23px;background:#f3f3f3;border:1.8px solid #7e7e7e;border-radius:5px"></div>
<svg class="a" style="left:608.6px;top:1151.0px" width="20" height="26" viewBox="0 0 20 26"><path d="M0.75 0.75 L12.6 0.75 L18.45 6.6 L18.45 24.75 L0.75 24.75 Z" fill="#fbfbfb" stroke="#858585" stroke-width="1.4" stroke-linejoin="round"/><path d="M12.6 0.75 L12.6 5.2 Q12.6 6.6 14 6.6 L18.45 6.6" fill="none" stroke="#858585" stroke-width="1.3"/><path d="M8.00 6.70 L8.56 5.53 L9.84 5.87 L9.76 7.16 L10.55 7.75 L11.77 7.33 L12.43 8.46 L11.46 9.32 L11.60 10.30 L12.77 10.86 L12.43 12.14 L11.14 12.06 L10.55 12.85 L10.97 14.07 L9.84 14.73 L8.98 13.76 L8.00 13.90 L7.44 15.07 L6.16 14.73 L6.24 13.44 L5.45 12.85 L4.23 13.27 L3.57 12.14 L4.54 11.28 L4.40 10.30 L3.23 9.74 L3.57 8.46 L4.86 8.54 L5.45 7.75 L5.03 6.53 L6.16 5.87 L7.02 6.84 Z M9.50 10.30 A1.5 1.5 0 1 0 6.50 10.30 A1.5 1.5 0 1 0 9.50 10.30 Z" fill="#98b3c6" fill-rule="evenodd"/><path d="M12.90 14.60 L13.45 13.94 L14.65 14.37 L14.66 15.22 L15.32 16.00 L16.17 16.15 L16.40 17.40 L15.67 17.84 L15.32 18.80 L15.62 19.60 L14.65 20.43 L13.90 20.01 L12.90 20.20 L12.35 20.86 L11.15 20.43 L11.14 19.58 L10.48 18.80 L9.63 18.65 L9.40 17.40 L10.13 16.96 L10.48 16.00 L10.18 15.20 L11.15 14.37 L11.90 14.79 Z M14.20 17.40 A1.3 1.3 0 1 0 11.60 17.40 A1.3 1.3 0 1 0 14.20 17.40 Z" fill="#4d525c" fill-rule="evenodd"/></svg>
<div class="t" style="left:643px;top:1153.52px;font-size:20.2px;line-height:22.56px;font-weight:400;color:#202020;">mshtml.dll</div>
<div class="t" style="left:1025px;top:1152.98px;font-size:20.8px;line-height:23.23px;font-weight:400;color:#202020;">C:\Windows\SysWOW64\</div>
<div class="t" style="right:348px;top:1153.52px;font-size:20.2px;line-height:22.56px;font-weight:400;color:#202020;">1</div>
<div class="t" style="right:200px;top:1153.88px;font-size:19.8px;line-height:22.12px;font-weight:400;color:#202020;">17,9 MB</div>
<div class="t" style="left:1822px;top:1153.52px;font-size:20.2px;line-height:22.56px;font-weight:400;color:#202020;">16.07.2025</div>
<div class="a" style="left:505px;top:1186.95px;width:1460px;height:47.05px;background:#abc1d0;border-top:1.5px solid #1f2124"></div>
<div class="a" style="left:1010px;top:1188.45px;width:1.5px;height:46.25px;background:#d0dbe3"></div>
<svg class="a" style="left:521px;top:1205.95px" width="16" height="10" viewBox="0 0 16 10"><path d="M1 1.5 L8 8.5 L15 1.5" fill="none" stroke="#2b2b2b" stroke-width="1.9"/></svg>
<div class="a" style="left:547.3px;top:1199.65px;width:23px;height:23px;background:#f3f3f3;border:1.8px solid #7e7e7e;border-radius:5px"></div>
<svg class="a" style="left:577px;top:1198.65px" width="20" height="26" viewBox="0 0 20 26"><path d="M0.75 0.75 L12.6 0.75 L18.45 6.6 L18.45 24.75 L0.75 24.75 Z" fill="#fbfbfb" stroke="#8a8a8a" stroke-width="1.4" stroke-linejoin="round"/><path d="M12.6 0.75 L12.6 5.2 Q12.6 6.6 14 6.6 L18.45 6.6" fill="none" stroke="#8a8a8a" stroke-width="1.3"/></svg>
<div class="t" style="left:612px;top:1200.97px;font-size:20.2px;line-height:22.56px;font-weight:700;color:#0d0d0d;">PixelFormatConvert_444_1Xu.cubin</div>
<div class="t" style="left:1025px;top:1200.06px;font-size:21.2px;line-height:23.68px;font-weight:700;color:#0d0d0d;">[multiple]</div>
<div class="t" style="right:348px;top:1200.61px;font-size:20.6px;line-height:23.01px;font-weight:700;color:#0d0d0d;">3</div>
<div class="t" style="right:200px;top:1200.61px;font-size:20.6px;line-height:23.01px;font-weight:700;color:#0d0d0d;">53,5 MB</div>
<div class="t" style="left:1822px;top:1200.06px;font-size:21.2px;line-height:23.68px;font-weight:700;color:#0d0d0d;">[multiple]</div>
<div class="a" style="left:578.6px;top:1246.8000000000002px;width:23px;height:23px;background:#f3f3f3;border:1.8px solid #7e7e7e;border-radius:5px"></div>
<svg class="a" style="left:608.6px;top:1245.9px" width="20" height="26" viewBox="0 0 20 26"><path d="M0.75 0.75 L12.6 0.75 L18.45 6.6 L18.45 24.75 L0.75 24.75 Z" fill="#fbfbfb" stroke="#8a8a8a" stroke-width="1.4" stroke-linejoin="round"/><path d="M12.6 0.75 L12.6 5.2 Q12.6 6.6 14 6.6 L18.45 6.6" fill="none" stroke="#8a8a8a" stroke-width="1.3"/></svg>
<div class="t" style="left:643px;top:1248.42px;font-size:20.2px;line-height:22.56px;font-weight:400;color:#202020;">PixelFormatConvert_444_1Xu.cubin</div>
<div class="t" style="left:1025px;top:1247.88px;font-size:20.8px;line-height:23.23px;font-weight:400;color:#202020;">C:\Program Files\Adobe\Adobe After Effects 2025\Supp...</div>
<div class="t" style="right:348px;top:1248.42px;font-size:20.2px;line-height:22.56px;font-weight:400;color:#202020;">1</div>
<div class="t" style="right:200px;top:1248.78px;font-size:19.8px;line-height:22.12px;font-weight:400;color:#202020;">17,8 MB</div>
<div class="t" style="left:1822px;top:1248.42px;font-size:20.2px;line-height:22.56px;font-weight:400;color:#202020;">27.06.2025</div>
<div class="a" style="left:578.6px;top:1294.2500000000002px;width:23px;height:23px;background:#f3f3f3;border:1.8px solid #7e7e7e;border-radius:5px"></div>
<svg class="a" style="left:608.6px;top:1293.3500000000001px" width="20" height="26" viewBox="0 0 20 26"><path d="M0.75 0.75 L12.6 0.75 L18.45 6.6 L18.45 24.75 L0.75 24.75 Z" fill="#fbfbfb" stroke="#8a8a8a" stroke-width="1.4" stroke-linejoin="round"/><path d="M12.6 0.75 L12.6 5.2 Q12.6 6.6 14 6.6 L18.45 6.6" fill="none" stroke="#8a8a8a" stroke-width="1.3"/></svg>
<div class="t" style="left:643px;top:1295.87px;font-size:20.2px;line-height:22.56px;font-weight:400;color:#202020;">PixelFormatConvert_444_1Xu.cubin</div>
<div class="t" style="left:1025px;top:1295.33px;font-size:20.8px;line-height:23.23px;font-weight:400;color:#202020;">C:\Program Files\Adobe\Adobe Media Encoder 2025\PT...</div>
<div class="t" style="right:348px;top:1295.87px;font-size:20.2px;line-height:22.56px;font-weight:400;color:#202020;">1</div>
<div class="t" style="right:200px;top:1296.23px;font-size:19.8px;line-height:22.12px;font-weight:400;color:#202020;">17,8 MB</div>
<div class="t" style="left:1822px;top:1295.87px;font-size:20.2px;line-height:22.56px;font-weight:400;color:#202020;">27.06.2025</div>
<div class="a" style="left:578.6px;top:1341.7px;width:23px;height:23px;background:#f3f3f3;border:1.8px solid #7e7e7e;border-radius:5px"></div>
<svg class="a" style="left:608.6px;top:1340.8px" width="20" height="26" viewBox="0 0 20 26"><path d="M0.75 0.75 L12.6 0.75 L18.45 6.6 L18.45 24.75 L0.75 24.75 Z" fill="#fbfbfb" stroke="#8a8a8a" stroke-width="1.4" stroke-linejoin="round"/><path d="M12.6 0.75 L12.6 5.2 Q12.6 6.6 14 6.6 L18.45 6.6" fill="none" stroke="#8a8a8a" stroke-width="1.3"/></svg>
<div class="t" style="left:643px;top:1343.32px;font-size:20.2px;line-height:22.56px;font-weight:400;color:#202020;">PixelFormatConvert_444_1Xu.cubin</div>
<div class="t" style="left:1025px;top:1342.78px;font-size:20.8px;line-height:23.23px;font-weight:400;color:#202020;">C:\Program Files\Adobe\Adobe Premiere Pro 2025\PTX\...</div>
<div class="t" style="right:348px;top:1343.32px;font-size:20.2px;line-height:22.56px;font-weight:400;color:#202020;">1</div>
<div class="t" style="right:200px;top:1343.68px;font-size:19.8px;line-height:22.12px;font-weight:400;color:#202020;">17,8 MB</div>
<div class="t" style="left:1822px;top:1343.32px;font-size:20.2px;line-height:22.56px;font-weight:400;color:#202020;">27.06.2025</div>
<div class="a" style="left:505px;top:1376.75px;width:1460px;height:47.05px;background:#abc1d0;border-top:1.5px solid #1f2124"></div>
<div class="a" style="left:1010px;top:1378.25px;width:1.5px;height:46.25px;background:#d0dbe3"></div>
<svg class="a" style="left:521px;top:1395.75px" width="16" height="10" viewBox="0 0 16 10"><path d="M1 1.5 L8 8.5 L15 1.5" fill="none" stroke="#2b2b2b" stroke-width="1.9"/></svg>
<div class="a" style="left:547.3px;top:1389.45px;width:23px;height:23px;background:#f3f3f3;border:1.8px solid #7e7e7e;border-radius:5px"></div>
<svg class="a" style="left:577px;top:1388.45px" width="20" height="26" viewBox="0 0 20 26"><path d="M0.75 0.75 L12.6 0.75 L18.45 6.6 L18.45 24.75 L0.75 24.75 Z" fill="#fbfbfb" stroke="#8a8a8a" stroke-width="1.4" stroke-linejoin="round"/><path d="M12.6 0.75 L12.6 5.2 Q12.6 6.6 14 6.6 L18.45 6.6" fill="none" stroke="#8a8a8a" stroke-width="1.3"/></svg>
<div class="t" style="left:612px;top:1390.77px;font-size:20.2px;line-height:22.56px;font-weight:700;color:#0d0d0d;">PixelFormatConvert_BiPlanar_Frame.c...</div>
<div class="t" style="left:1025px;top:1389.86px;font-size:21.2px;line-height:23.68px;font-weight:700;color:#0d0d0d;">[multiple]</div>
<div class="t" style="right:348px;top:1390.41px;font-size:20.6px;line-height:23.01px;font-weight:700;color:#0d0d0d;">3</div>
<div class="t" style="right:200px;top:1390.41px;font-size:20.6px;line-height:23.01px;font-weight:700;color:#0d0d0d;">53,4 MB</div>
<div class="t" style="left:1822px;top:1389.86px;font-size:21.2px;line-height:23.68px;font-weight:700;color:#0d0d0d;">[multiple]</div>
<div class="a" style="left:578.6px;top:1436.6000000000001px;width:23px;height:23px;background:#f3f3f3;border:1.8px solid #7e7e7e;border-radius:5px"></div>
<svg class="a" style="left:608.6px;top:1435.7px" width="20" height="26" viewBox="0 0 20 26"><path d="M0.75 0.75 L12.6 0.75 L18.45 6.6 L18.45 24.75 L0.75 24.75 Z" fill="#fbfbfb" stroke="#8a8a8a" stroke-width="1.4" stroke-linejoin="round"/><path d="M12.6 0.75 L12.6 5.2 Q12.6 6.6 14 6.6 L18.45 6.6" fill="none" stroke="#8a8a8a" stroke-width="1.3"/></svg>
<div class="t" style="left:643px;top:1438.22px;font-size:20.2px;line-height:22.56px;font-weight:400;color:#202020;">PixelFormatConvert_BiPlanar_Frame.c...</div>
<div class="t" style="left:1025px;top:1437.68px;font-size:20.8px;line-height:23.23px;font-weight:400;color:#202020;">C:\Program Files\Adobe\Adobe Premiere Pro 2025\PTX\...</div>
<div class="t" style="right:348px;top:1438.22px;font-size:20.2px;line-height:22.56px;font-weight:400;color:#202020;">1</div>
<div class="t" style="right:200px;top:1438.58px;font-size:19.8px;line-height:22.12px;font-weight:400;color:#202020;">17,8 MB</div>
<div class="t" style="left:1822px;top:1438.22px;font-size:20.2px;line-height:22.56px;font-weight:400;color:#202020;">27.06.2025</div>
</div></div>
</body></html>
